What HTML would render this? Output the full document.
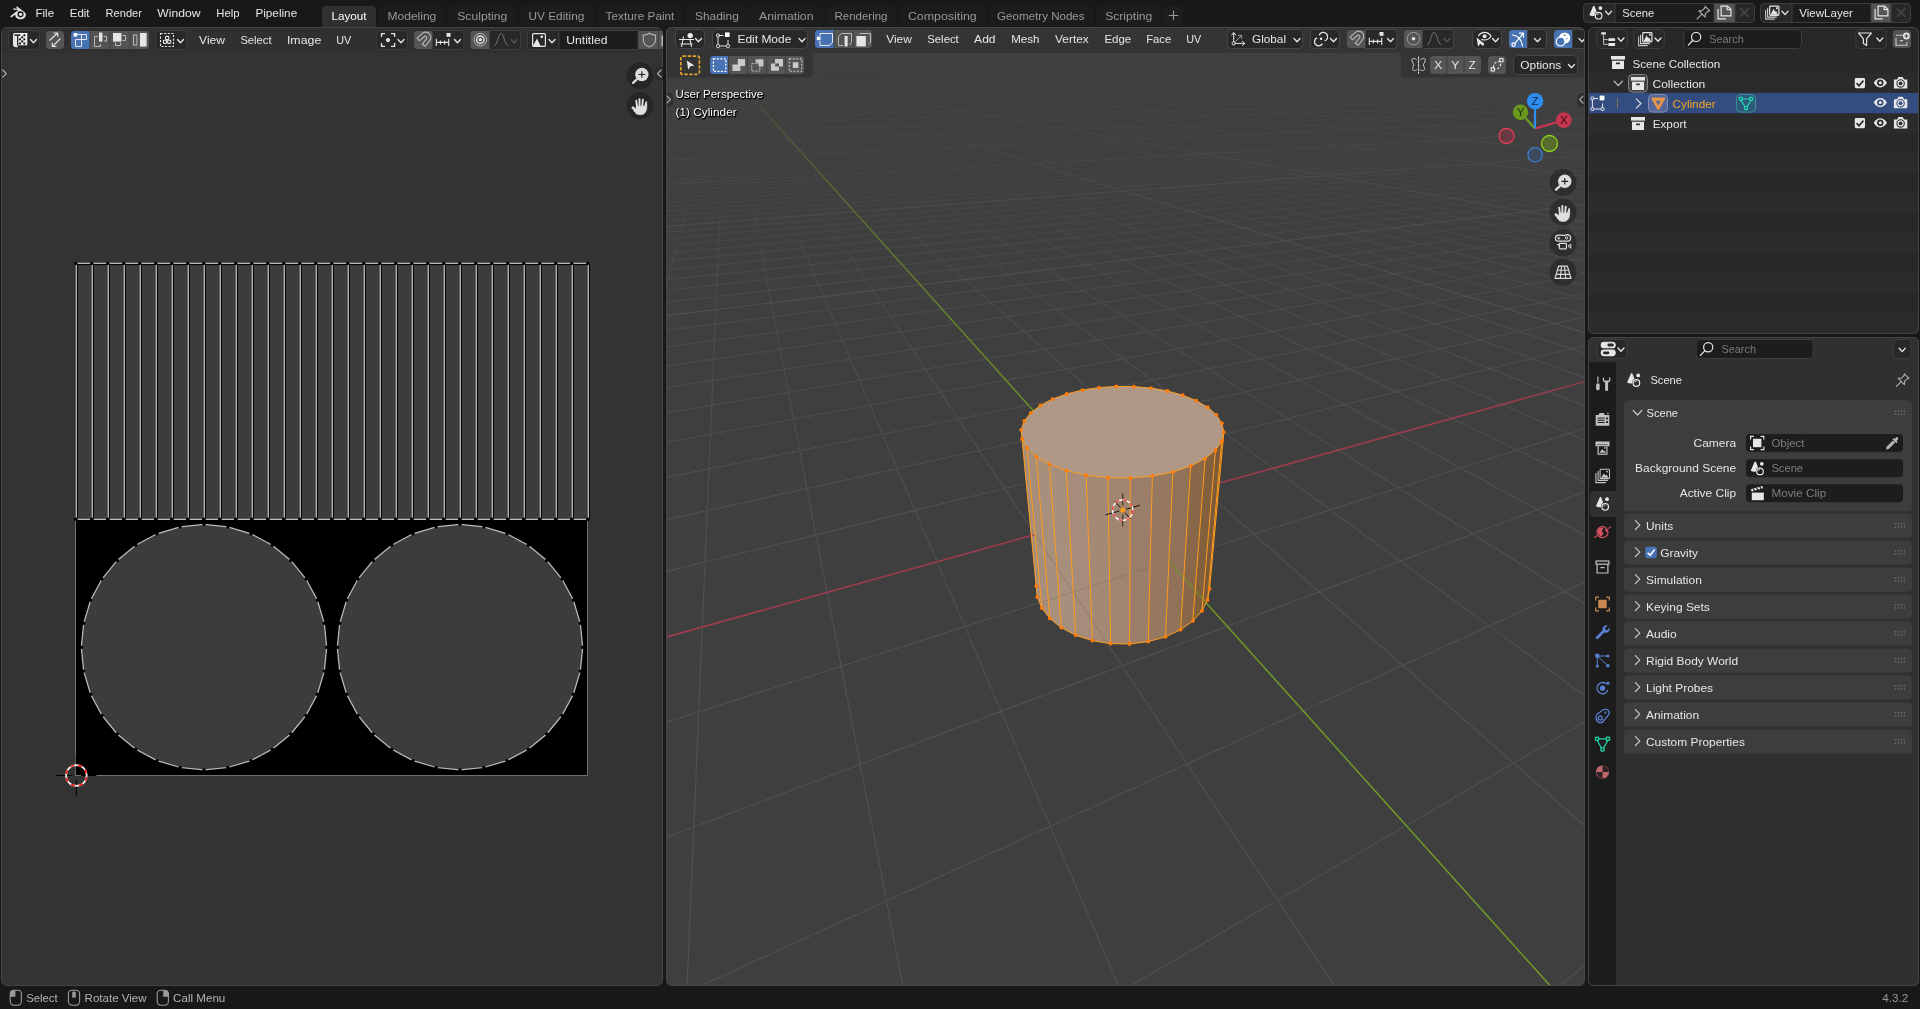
<!DOCTYPE html><html><head><meta charset="utf-8"><title>Blender</title><style>html,body{margin:0;padding:0;background:#181818;overflow:hidden}body{width:1920px;height:1009px}</style></head><body><svg width="1920" height="1009" viewBox="0 0 1920 1009" font-family="'Liberation Sans',sans-serif" style="display:block;will-change:transform">
<rect x="0" y="0" width="1920" height="1009" fill="#181818"/>
<defs>
<clipPath id="c3d"><rect x="666.5" y="27.5" width="918" height="958" rx="5"/></clipPath>
<clipPath id="cuv"><rect x="1.5" y="27.5" width="661" height="958" rx="5"/></clipPath>
<clipPath id="cout"><rect x="1588.5" y="27.5" width="330" height="306" rx="5"/></clipPath>
<clipPath id="cpr"><rect x="1588.5" y="337.5" width="330" height="648" rx="5"/></clipPath>
</defs>
<g transform="translate(9.3,5.1) scale(1.13)" fill="#e6e6e6">
<path d="M1.2 9.6 L8.2 4.2 L3.9 4.2 C3.2 4.2 3.2 3.1 3.9 3.1 L7.5 3.1 L6.3 2.1 C5.7 1.6 6.4 0.8 7 1.3 L13.6 6.4 C15.8 8.3 14.6 12.6 10 12.6 C6.6 12.6 5 10.3 5.3 8.4 L2.4 10.6 C1.5 11.2 0.5 10.2 1.2 9.6 Z M10 5.3 A2.7 2.7 0 1 0 10 10.9 A2.7 2.7 0 1 0 10 5.5 Z" fill-rule="evenodd"/>
<circle cx="10" cy="8.2" r="1.5"/>
</g>
<text x="35.4" y="17" fill="#e6e6e6" font-size="11.2" textLength="18.7" lengthAdjust="spacingAndGlyphs">File</text>
<text x="69.75" y="17" fill="#e6e6e6" font-size="11.2" textLength="19.8" lengthAdjust="spacingAndGlyphs">Edit</text>
<text x="105.6" y="17" fill="#e6e6e6" font-size="11.2" textLength="36.3" lengthAdjust="spacingAndGlyphs">Render</text>
<text x="157.25" y="17" fill="#e6e6e6" font-size="11.2" textLength="43.2" lengthAdjust="spacingAndGlyphs">Window</text>
<text x="216.25" y="17" fill="#e6e6e6" font-size="11.2" textLength="23.2" lengthAdjust="spacingAndGlyphs">Help</text>
<text x="255.4" y="17" fill="#e6e6e6" font-size="11.2" textLength="41.8" lengthAdjust="spacingAndGlyphs">Pipeline</text>
<path d="M326 6 H372 A4 4 0 0 1 376 10 V23 A4 4 0 0 1 372 27 H326 A4 4 0 0 1 322 23 V10 A4 4 0 0 1 326 6Z" fill="#303030"/>
<rect x="322" y="22" width="54" height="5" fill="#303030"/>
<text x="331.5" y="20" fill="#ffffff" font-size="11.2" textLength="35.0" lengthAdjust="spacingAndGlyphs">Layout</text>
<path d="M378 27V10a4 4 0 0 1 4-4H441.75a4 4 0 0 1 4 4V27Z" fill="#1c1c1c"/>
<text x="387.5" y="20" fill="#989898" font-size="11.2" textLength="48.8" lengthAdjust="spacingAndGlyphs">Modeling</text>
<path d="M447.75 27V10a4 4 0 0 1 4-4H512.75a4 4 0 0 1 4 4V27Z" fill="#1c1c1c"/>
<text x="457.25" y="20" fill="#989898" font-size="11.2" textLength="50.0" lengthAdjust="spacingAndGlyphs">Sculpting</text>
<path d="M519 27V10a4 4 0 0 1 4-4H589.9a4 4 0 0 1 4 4V27Z" fill="#1c1c1c"/>
<text x="528.5" y="20" fill="#989898" font-size="11.2" textLength="55.9" lengthAdjust="spacingAndGlyphs">UV Editing</text>
<path d="M596.1 27V10a4 4 0 0 1 4-4H679.9a4 4 0 0 1 4 4V27Z" fill="#1c1c1c"/>
<text x="605.6" y="20" fill="#989898" font-size="11.2" textLength="68.8" lengthAdjust="spacingAndGlyphs">Texture Paint</text>
<path d="M685.5 27V10a4 4 0 0 1 4-4H744.25a4 4 0 0 1 4 4V27Z" fill="#1c1c1c"/>
<text x="695" y="20" fill="#989898" font-size="11.2" textLength="43.8" lengthAdjust="spacingAndGlyphs">Shading</text>
<path d="M749.5 27V10a4 4 0 0 1 4-4H819a4 4 0 0 1 4 4V27Z" fill="#1c1c1c"/>
<text x="759" y="20" fill="#989898" font-size="11.2" textLength="54.5" lengthAdjust="spacingAndGlyphs">Animation</text>
<path d="M825.1 27V10a4 4 0 0 1 4-4H893a4 4 0 0 1 4 4V27Z" fill="#1c1c1c"/>
<text x="834.6" y="20" fill="#989898" font-size="11.2" textLength="52.9" lengthAdjust="spacingAndGlyphs">Rendering</text>
<path d="M898.4 27V10a4 4 0 0 1 4-4H982.2a4 4 0 0 1 4 4V27Z" fill="#1c1c1c"/>
<text x="907.9" y="20" fill="#989898" font-size="11.2" textLength="68.8" lengthAdjust="spacingAndGlyphs">Compositing</text>
<path d="M987.6 27V10a4 4 0 0 1 4-4H1090.1a4 4 0 0 1 4 4V27Z" fill="#1c1c1c"/>
<text x="997.1" y="20" fill="#989898" font-size="11.2" textLength="87.5" lengthAdjust="spacingAndGlyphs">Geometry Nodes</text>
<path d="M1095.7 27V10a4 4 0 0 1 4-4H1157.8a4 4 0 0 1 4 4V27Z" fill="#1c1c1c"/>
<text x="1105.2" y="20" fill="#989898" font-size="11.2" textLength="47.1" lengthAdjust="spacingAndGlyphs">Scripting</text>
<path d="M1163.5 27V10a4 4 0 0 1 4-4H1179a4 4 0 0 1 4 4V27Z" fill="#1d1d1d"/>
<path d="M1168.8 15.5H1178.2M1173.5 10.8V20.2" fill="none" stroke="#989898" stroke-width="1.1"/>
<rect x="0" y="26" width="1583" height="1.5" fill="#181818"/>
<rect x="322" y="26" width="54" height="1" fill="#303030"/>
<rect x="1583" y="3" width="172" height="20" fill="#3d3d3d" rx="4.5"/>
<clipPath id="gc1"><rect x="1584" y="4" width="170" height="18" rx="3.5"/></clipPath>
<g clip-path="url(#gc1)">
<rect x="1583" y="3" width="32" height="20" fill="#282828"/>
<rect x="1615" y="3" width="99" height="20" fill="#1d1d1d"/>
<rect x="1714" y="3" width="21" height="20" fill="#545454"/>
<rect x="1735" y="3" width="20" height="20" fill="#282828"/>
<rect x="1614.5" y="3" width="1" height="20" fill="#3e3e3e"/>
<rect x="1713.5" y="3" width="1" height="20" fill="#3e3e3e"/>
<rect x="1734.5" y="3" width="1" height="20" fill="#3e3e3e"/>
</g>
<text x="1622.3" y="16.5" fill="#e6e6e6" font-size="11.2" textLength="31.9" lengthAdjust="spacingAndGlyphs">Scene</text>
<rect x="1760" y="3" width="151" height="20" fill="#3d3d3d" rx="4.5"/>
<clipPath id="gc2"><rect x="1761" y="4" width="149" height="18" rx="3.5"/></clipPath>
<g clip-path="url(#gc2)">
<rect x="1760" y="3" width="32" height="20" fill="#282828"/>
<rect x="1792" y="3" width="79" height="20" fill="#1d1d1d"/>
<rect x="1871" y="3" width="20" height="20" fill="#545454"/>
<rect x="1891" y="3" width="20" height="20" fill="#282828"/>
<rect x="1791.5" y="3" width="1" height="20" fill="#3e3e3e"/>
<rect x="1870.5" y="3" width="1" height="20" fill="#3e3e3e"/>
<rect x="1890.5" y="3" width="1" height="20" fill="#3e3e3e"/>
</g>
<text x="1799.3" y="16.5" fill="#e6e6e6" font-size="11.2" textLength="53.6" lengthAdjust="spacingAndGlyphs">ViewLayer</text>
<g transform="translate(1589,5.5)">
<path d="M0.3 9.6 L4.2 0.6 Q5 -0.2 5.6 0.8 L7.6 6 Q5.2 7.2 5.6 10.4 Q2.5 11 0.3 9.6Z" fill="#e6e6e6"/>
<circle cx="11.4" cy="2.6" r="1.9" fill="#e6e6e6"/>
<circle cx="9.6" cy="10.2" r="3.3" fill="#282828" stroke="#e6e6e6" stroke-width="1.2"/>
<path d="M8 9.6A2 2 0 0 1 9.8 8.3" stroke="#e6e6e6" stroke-width="0.9" fill="none"/>
</g>
<path d="M1605.5 11.3L1608.5 14.6L1611.5 11.3" fill="none" stroke="#e6e6e6" stroke-width="1.3" stroke-linecap="round" stroke-linejoin="round"/>
<g transform="translate(1696.5,5.5)" fill="none" stroke="#b0b0b0" stroke-width="1.1" stroke-linejoin="round" stroke-linecap="round">
<path d="M8.6 0.8L13.2 5.4L11.4 5.8L8.8 8.4L8.6 11.6L2.4 5.4L5.6 5.2L8.2 2.6Z"/>
<path d="M5.4 8.6L0.6 13.4"/>
</g>
<g transform="translate(1717.5,5.5)" fill="none" stroke="#e6e6e6" stroke-width="1.2">
<path d="M0.6 3.6V13.4H8.4"/>
<path d="M3.6 0.6H10L13.4 3.8V10.4H3.6Z" fill="#545454"/>
<path d="M9.6 0.6V4.2H13.4"/>
</g>
<path d="M1740.3 8.3L1748.7 16.7M1748.7 8.3L1740.3 16.7" fill="none" stroke="#4a4a4a" stroke-width="1.3"/>
<g transform="translate(1765,5.5)" fill="none" stroke="#e6e6e6" stroke-width="1.1">
<path d="M0.6 4.6V13.6H9.8" stroke-opacity="0.8"/><path d="M2.6 2.8V11.6H11.8" stroke-opacity="0.9"/>
<rect x="4.7" y="0.6" width="9.2" height="9.2" rx="0.8" fill="#282828" stroke-width="1.2"/>
<path d="M5.6 9.2L8.6 3.2L10.2 6.2L11 5.2L13 9.2Z" fill="#e6e6e6" stroke="none"/>
<rect x="11" y="1.8" width="1.8" height="1.8" fill="#e6e6e6" stroke="none"/>
</g>
<path d="M1782 11.3L1785 14.6L1788 11.3" fill="none" stroke="#e6e6e6" stroke-width="1.3" stroke-linecap="round" stroke-linejoin="round"/>
<g transform="translate(1874.5,5.5)" fill="none" stroke="#e6e6e6" stroke-width="1.2">
<path d="M0.6 3.6V13.4H8.4"/>
<path d="M3.6 0.6H10L13.4 3.8V10.4H3.6Z" fill="#545454"/>
<path d="M9.6 0.6V4.2H13.4"/>
</g>
<path d="M1896.8 8.3L1905.2 16.7M1905.2 8.3L1896.8 16.7" fill="none" stroke="#4a4a4a" stroke-width="1.3"/>
<rect x="1.5" y="27.5" width="661" height="958" fill="#333333" rx="5" stroke="#434343" stroke-width="1"/>
<g clip-path="url(#cuv)">
<rect x="2" y="28" width="660" height="25" fill="#303030"/>
<rect x="76" y="519" width="511" height="256" fill="#000000"/>
<path d="M75.5 519V775.5H587.5V519" fill="none" stroke="#707070" stroke-width="1"/>
<rect x="76" y="263" width="512" height="256.5" fill="#3c3c3c"/>
<path d="M77.5 263.5V519.5M93.5 263.5V519.5M109.5 263.5V519.5M125.5 263.5V519.5M141.5 263.5V519.5M157.5 263.5V519.5M173.5 263.5V519.5M189.5 263.5V519.5M205.5 263.5V519.5M221.5 263.5V519.5M237.5 263.5V519.5M253.5 263.5V519.5M269.5 263.5V519.5M285.5 263.5V519.5M301.5 263.5V519.5M317.5 263.5V519.5M333.5 263.5V519.5M349.5 263.5V519.5M365.5 263.5V519.5M381.5 263.5V519.5M397.5 263.5V519.5M413.5 263.5V519.5M429.5 263.5V519.5M445.5 263.5V519.5M461.5 263.5V519.5M477.5 263.5V519.5M493.5 263.5V519.5M509.5 263.5V519.5M525.5 263.5V519.5M541.5 263.5V519.5M557.5 263.5V519.5M573.5 263.5V519.5M589.5 263.5V519.5" fill="none" stroke="#000000" stroke-width="0.9"/>
<path d="M76 264.6H589M76 520.6H589" fill="none" stroke="#000000" stroke-width="1"/>
<path d="M76.3 263.3V519.5M92.3 263.3V519.5M108.3 263.3V519.5M124.3 263.3V519.5M140.3 263.3V519.5M156.3 263.3V519.5M172.3 263.3V519.5M188.3 263.3V519.5M204.3 263.3V519.5M220.3 263.3V519.5M236.3 263.3V519.5M252.3 263.3V519.5M268.3 263.3V519.5M284.3 263.3V519.5M300.3 263.3V519.5M316.3 263.3V519.5M332.3 263.3V519.5M348.3 263.3V519.5M364.3 263.3V519.5M380.3 263.3V519.5M396.3 263.3V519.5M412.3 263.3V519.5M428.3 263.3V519.5M444.3 263.3V519.5M460.3 263.3V519.5M476.3 263.3V519.5M492.3 263.3V519.5M508.3 263.3V519.5M524.3 263.3V519.5M540.3 263.3V519.5M556.3 263.3V519.5M572.3 263.3V519.5M588.3 263.3V519.5" fill="none" stroke="#bcbcbc" stroke-width="1.25"/>
<path d="M76 263.3H588.5M76 519.3H588.5" fill="none" stroke="#bcbcbc" stroke-width="1.25"/>
<path d="M326.7 647.2L324.3 623.3L317.4 600.2L306.0 579.0L290.8 560.4L272.2 545.2L251.0 533.8L227.9 526.9L204.0 524.5L180.1 526.9L157.0 533.8L135.8 545.2L117.2 560.4L102.0 579.0L90.6 600.2L83.7 623.3L81.3 647.2L83.7 671.1L90.6 694.2L102.0 715.4L117.2 734.0L135.8 749.2L157.0 760.6L180.1 767.5L204.0 769.9L227.9 767.5L251.0 760.6L272.2 749.2L290.8 734.0L306.0 715.4L317.4 694.2L324.3 671.1Z" fill="#3c3c3c" stroke="#bcbcbc" stroke-width="1.25"/>
<circle cx="326.7" cy="647.2" r="1.7" fill="#000"/>
<circle cx="324.3" cy="623.3" r="1.7" fill="#000"/>
<circle cx="317.4" cy="600.2" r="1.7" fill="#000"/>
<circle cx="306.0" cy="579.0" r="1.7" fill="#000"/>
<circle cx="290.8" cy="560.4" r="1.7" fill="#000"/>
<circle cx="272.2" cy="545.2" r="1.7" fill="#000"/>
<circle cx="251.0" cy="533.8" r="1.7" fill="#000"/>
<circle cx="227.9" cy="526.9" r="1.7" fill="#000"/>
<circle cx="204.0" cy="524.5" r="1.7" fill="#000"/>
<circle cx="180.1" cy="526.9" r="1.7" fill="#000"/>
<circle cx="157.0" cy="533.8" r="1.7" fill="#000"/>
<circle cx="135.8" cy="545.2" r="1.7" fill="#000"/>
<circle cx="117.2" cy="560.4" r="1.7" fill="#000"/>
<circle cx="102.0" cy="579.0" r="1.7" fill="#000"/>
<circle cx="90.6" cy="600.2" r="1.7" fill="#000"/>
<circle cx="83.7" cy="623.3" r="1.7" fill="#000"/>
<circle cx="81.3" cy="647.2" r="1.7" fill="#000"/>
<circle cx="83.7" cy="671.1" r="1.7" fill="#000"/>
<circle cx="90.6" cy="694.2" r="1.7" fill="#000"/>
<circle cx="102.0" cy="715.4" r="1.7" fill="#000"/>
<circle cx="117.2" cy="734.0" r="1.7" fill="#000"/>
<circle cx="135.8" cy="749.2" r="1.7" fill="#000"/>
<circle cx="157.0" cy="760.6" r="1.7" fill="#000"/>
<circle cx="180.1" cy="767.5" r="1.7" fill="#000"/>
<circle cx="204.0" cy="769.9" r="1.7" fill="#000"/>
<circle cx="227.9" cy="767.5" r="1.7" fill="#000"/>
<circle cx="251.0" cy="760.6" r="1.7" fill="#000"/>
<circle cx="272.2" cy="749.2" r="1.7" fill="#000"/>
<circle cx="290.8" cy="734.0" r="1.7" fill="#000"/>
<circle cx="306.0" cy="715.4" r="1.7" fill="#000"/>
<circle cx="317.4" cy="694.2" r="1.7" fill="#000"/>
<circle cx="324.3" cy="671.1" r="1.7" fill="#000"/>
<path d="M582.7 647.2L580.3 623.3L573.4 600.2L562.0 579.0L546.8 560.4L528.2 545.2L507.0 533.8L483.9 526.9L460.0 524.5L436.1 526.9L413.0 533.8L391.8 545.2L373.2 560.4L358.0 579.0L346.6 600.2L339.7 623.3L337.3 647.2L339.7 671.1L346.6 694.2L358.0 715.4L373.2 734.0L391.8 749.2L413.0 760.6L436.1 767.5L460.0 769.9L483.9 767.5L507.0 760.6L528.2 749.2L546.8 734.0L562.0 715.4L573.4 694.2L580.3 671.1Z" fill="#3c3c3c" stroke="#bcbcbc" stroke-width="1.25"/>
<circle cx="582.7" cy="647.2" r="1.7" fill="#000"/>
<circle cx="580.3" cy="623.3" r="1.7" fill="#000"/>
<circle cx="573.4" cy="600.2" r="1.7" fill="#000"/>
<circle cx="562.0" cy="579.0" r="1.7" fill="#000"/>
<circle cx="546.8" cy="560.4" r="1.7" fill="#000"/>
<circle cx="528.2" cy="545.2" r="1.7" fill="#000"/>
<circle cx="507.0" cy="533.8" r="1.7" fill="#000"/>
<circle cx="483.9" cy="526.9" r="1.7" fill="#000"/>
<circle cx="460.0" cy="524.5" r="1.7" fill="#000"/>
<circle cx="436.1" cy="526.9" r="1.7" fill="#000"/>
<circle cx="413.0" cy="533.8" r="1.7" fill="#000"/>
<circle cx="391.8" cy="545.2" r="1.7" fill="#000"/>
<circle cx="373.2" cy="560.4" r="1.7" fill="#000"/>
<circle cx="358.0" cy="579.0" r="1.7" fill="#000"/>
<circle cx="346.6" cy="600.2" r="1.7" fill="#000"/>
<circle cx="339.7" cy="623.3" r="1.7" fill="#000"/>
<circle cx="337.3" cy="647.2" r="1.7" fill="#000"/>
<circle cx="339.7" cy="671.1" r="1.7" fill="#000"/>
<circle cx="346.6" cy="694.2" r="1.7" fill="#000"/>
<circle cx="358.0" cy="715.4" r="1.7" fill="#000"/>
<circle cx="373.2" cy="734.0" r="1.7" fill="#000"/>
<circle cx="391.8" cy="749.2" r="1.7" fill="#000"/>
<circle cx="413.0" cy="760.6" r="1.7" fill="#000"/>
<circle cx="436.1" cy="767.5" r="1.7" fill="#000"/>
<circle cx="460.0" cy="769.9" r="1.7" fill="#000"/>
<circle cx="483.9" cy="767.5" r="1.7" fill="#000"/>
<circle cx="507.0" cy="760.6" r="1.7" fill="#000"/>
<circle cx="528.2" cy="749.2" r="1.7" fill="#000"/>
<circle cx="546.8" cy="734.0" r="1.7" fill="#000"/>
<circle cx="562.0" cy="715.4" r="1.7" fill="#000"/>
<circle cx="573.4" cy="694.2" r="1.7" fill="#000"/>
<circle cx="580.3" cy="671.1" r="1.7" fill="#000"/>
<circle cx="75.8" cy="263.4" r="1.7" fill="#000"/>
<circle cx="75.8" cy="519.3" r="1.7" fill="#000"/>
<circle cx="91.8" cy="263.4" r="1.7" fill="#000"/>
<circle cx="91.8" cy="519.3" r="1.7" fill="#000"/>
<circle cx="107.8" cy="263.4" r="1.7" fill="#000"/>
<circle cx="107.8" cy="519.3" r="1.7" fill="#000"/>
<circle cx="123.8" cy="263.4" r="1.7" fill="#000"/>
<circle cx="123.8" cy="519.3" r="1.7" fill="#000"/>
<circle cx="139.8" cy="263.4" r="1.7" fill="#000"/>
<circle cx="139.8" cy="519.3" r="1.7" fill="#000"/>
<circle cx="155.8" cy="263.4" r="1.7" fill="#000"/>
<circle cx="155.8" cy="519.3" r="1.7" fill="#000"/>
<circle cx="171.8" cy="263.4" r="1.7" fill="#000"/>
<circle cx="171.8" cy="519.3" r="1.7" fill="#000"/>
<circle cx="187.8" cy="263.4" r="1.7" fill="#000"/>
<circle cx="187.8" cy="519.3" r="1.7" fill="#000"/>
<circle cx="203.8" cy="263.4" r="1.7" fill="#000"/>
<circle cx="203.8" cy="519.3" r="1.7" fill="#000"/>
<circle cx="219.8" cy="263.4" r="1.7" fill="#000"/>
<circle cx="219.8" cy="519.3" r="1.7" fill="#000"/>
<circle cx="235.8" cy="263.4" r="1.7" fill="#000"/>
<circle cx="235.8" cy="519.3" r="1.7" fill="#000"/>
<circle cx="251.8" cy="263.4" r="1.7" fill="#000"/>
<circle cx="251.8" cy="519.3" r="1.7" fill="#000"/>
<circle cx="267.8" cy="263.4" r="1.7" fill="#000"/>
<circle cx="267.8" cy="519.3" r="1.7" fill="#000"/>
<circle cx="283.8" cy="263.4" r="1.7" fill="#000"/>
<circle cx="283.8" cy="519.3" r="1.7" fill="#000"/>
<circle cx="299.8" cy="263.4" r="1.7" fill="#000"/>
<circle cx="299.8" cy="519.3" r="1.7" fill="#000"/>
<circle cx="315.8" cy="263.4" r="1.7" fill="#000"/>
<circle cx="315.8" cy="519.3" r="1.7" fill="#000"/>
<circle cx="331.8" cy="263.4" r="1.7" fill="#000"/>
<circle cx="331.8" cy="519.3" r="1.7" fill="#000"/>
<circle cx="347.8" cy="263.4" r="1.7" fill="#000"/>
<circle cx="347.8" cy="519.3" r="1.7" fill="#000"/>
<circle cx="363.8" cy="263.4" r="1.7" fill="#000"/>
<circle cx="363.8" cy="519.3" r="1.7" fill="#000"/>
<circle cx="379.8" cy="263.4" r="1.7" fill="#000"/>
<circle cx="379.8" cy="519.3" r="1.7" fill="#000"/>
<circle cx="395.8" cy="263.4" r="1.7" fill="#000"/>
<circle cx="395.8" cy="519.3" r="1.7" fill="#000"/>
<circle cx="411.8" cy="263.4" r="1.7" fill="#000"/>
<circle cx="411.8" cy="519.3" r="1.7" fill="#000"/>
<circle cx="427.8" cy="263.4" r="1.7" fill="#000"/>
<circle cx="427.8" cy="519.3" r="1.7" fill="#000"/>
<circle cx="443.8" cy="263.4" r="1.7" fill="#000"/>
<circle cx="443.8" cy="519.3" r="1.7" fill="#000"/>
<circle cx="459.8" cy="263.4" r="1.7" fill="#000"/>
<circle cx="459.8" cy="519.3" r="1.7" fill="#000"/>
<circle cx="475.8" cy="263.4" r="1.7" fill="#000"/>
<circle cx="475.8" cy="519.3" r="1.7" fill="#000"/>
<circle cx="491.8" cy="263.4" r="1.7" fill="#000"/>
<circle cx="491.8" cy="519.3" r="1.7" fill="#000"/>
<circle cx="507.8" cy="263.4" r="1.7" fill="#000"/>
<circle cx="507.8" cy="519.3" r="1.7" fill="#000"/>
<circle cx="523.8" cy="263.4" r="1.7" fill="#000"/>
<circle cx="523.8" cy="519.3" r="1.7" fill="#000"/>
<circle cx="539.8" cy="263.4" r="1.7" fill="#000"/>
<circle cx="539.8" cy="519.3" r="1.7" fill="#000"/>
<circle cx="555.8" cy="263.4" r="1.7" fill="#000"/>
<circle cx="555.8" cy="519.3" r="1.7" fill="#000"/>
<circle cx="571.8" cy="263.4" r="1.7" fill="#000"/>
<circle cx="571.8" cy="519.3" r="1.7" fill="#000"/>
<circle cx="587.8" cy="263.4" r="1.7" fill="#000"/>
<circle cx="587.8" cy="519.3" r="1.7" fill="#000"/>
<g transform="translate(76.4,775.5)">
<path d="M-20 0H-4.7M4.7 0H20M0 -20V-4.7M0 4.7V20" fill="none" stroke="#000" stroke-width="1.2"/>
<circle r="10.3" fill="none" stroke="#f2f2f2" stroke-width="1.7"/>
<circle r="10.3" fill="none" stroke="#f01818" stroke-width="1.7" stroke-dasharray="4.045 4.045" transform="rotate(8)"/>
</g>
</g>
<rect x="8.5" y="30.5" width="31" height="19" fill="#282828" rx="4" stroke="#3d3d3d" stroke-width="1"/>
<g transform="translate(13,33)">
<path d="M0 1.8Q0 0 2 0H14.3V12.2H4.6V14.2Q1.6 14.6 0 12.4Z" fill="#f2f2f2"/>
<path d="M0.3 2.6H4V14.1Q1.6 14.4 0.3 12.4Z" fill="#e2e2e2"/>
<path d="M1.4 2.1H7.4" stroke="#161616" stroke-width="1.5" fill="none"/><path d="M4.7 2.6V12.3" stroke="#202020" stroke-width="1.3" fill="none"/>
<rect x="10.4" y="1.3" width="1.9" height="1.9" fill="#0a0a0a"/>
<rect x="8.25" y="3.35" width="1.9" height="1.9" fill="#0a0a0a"/>
<rect x="6.1" y="5.4" width="1.9" height="1.9" fill="#0a0a0a"/>
<rect x="10.4" y="5.4" width="1.9" height="1.9" fill="#0a0a0a"/>
<rect x="8.25" y="7.45" width="1.9" height="1.9" fill="#0a0a0a"/>
<rect x="6.1" y="9.5" width="1.9" height="1.9" fill="#0a0a0a"/>
<rect x="10.4" y="9.5" width="1.9" height="1.9" fill="#0a0a0a"/>
</g>
<path d="M30.5 39.5L33.5 42.8L36.5 39.5" fill="none" stroke="#e6e6e6" stroke-width="1.3" stroke-linecap="round" stroke-linejoin="round"/>
<rect x="46" y="31" width="18" height="18" fill="#545454" rx="3.5"/>
<path d="M49.5 40.5L57.5 33M53.5 33H57.7V37M60.5 38.5L52.5 46.5M56.5 46.5H52.3V42.5" fill="none" stroke="#e6e6e6" stroke-width="1.1" stroke-linejoin="round"/>
<clipPath id="gc3"><rect x="71" y="31" width="78" height="18" rx="3.5"/></clipPath>
<g clip-path="url(#gc3)">
<rect x="70" y="30" width="20" height="20" fill="#4772b3"/>
<rect x="90" y="30" width="20" height="20" fill="#545454"/>
<rect x="110" y="30" width="20" height="20" fill="#545454"/>
<rect x="130" y="30" width="20" height="20" fill="#545454"/>
<rect x="89.5" y="30" width="1" height="20" fill="#3e3e3e"/>
<rect x="109.5" y="30" width="1" height="20" fill="#3e3e3e"/>
<rect x="129.5" y="30" width="1" height="20" fill="#3e3e3e"/>
</g>
<g fill="none" stroke="#e6e6e6" stroke-width="1">
<path d="M75.5 34.5H86.5V39.5H75.5V46.5H81.5V34.5"/>
<rect x="73.6" y="33" width="3.6" height="3.6" fill="#fff" stroke="none"/>
</g>
<g fill="none" stroke="#b8b8b8" stroke-width="1">
<path d="M98 36.5H94.5V46.5H100.5V44M103.5 36.5H106.5V41H104"/>
<rect x="99" y="32.6" width="3.4" height="9" fill="#e6e6e6" stroke="none"/>
</g>
<g fill="none" stroke="#b8b8b8" stroke-width="1">
<path d="M115.5 42.5V45.5H120.5V42.5M122.5 35.5H125.5V40.5H122.5"/>
<rect x="113" y="33" width="8.4" height="8.6" fill="#e6e6e6" stroke="none"/>
</g>
<g fill="none" stroke="#b8b8b8" stroke-width="1">
<rect x="133.5" y="35" width="3.4" height="10"/>
<rect x="140" y="33" width="6.6" height="13.6" fill="#e6e6e6" stroke="none"/>
</g>
<rect x="155.5" y="30.5" width="31" height="19" fill="#282828" rx="4" stroke="#3d3d3d" stroke-width="1"/>
<g fill="none" stroke="#e6e6e6" stroke-width="1.1">
<rect x="160.5" y="33.5" width="13" height="13" stroke-dasharray="2.2 1.4"/>
<rect x="165.6" y="36.4" width="3.2" height="3.2" rx="0.8"/><rect x="163.4" y="40.2" width="3.2" height="3.2" rx="0.8"/><rect x="167.6" y="40.2" width="3.2" height="3.2" rx="0.8"/>
</g>
<path d="M177.5 39.5L180.5 42.8L183.5 39.5" fill="none" stroke="#e6e6e6" stroke-width="1.3" stroke-linecap="round" stroke-linejoin="round"/>
<text x="199.1" y="44" fill="#e6e6e6" font-size="11.2" textLength="25.9" lengthAdjust="spacingAndGlyphs">View</text>
<text x="240.4" y="44" fill="#e6e6e6" font-size="11.2" textLength="31.1" lengthAdjust="spacingAndGlyphs">Select</text>
<text x="286.9" y="44" fill="#e6e6e6" font-size="11.2" textLength="34.4" lengthAdjust="spacingAndGlyphs">Image</text>
<text x="336.25" y="44" fill="#e6e6e6" font-size="11.2" textLength="15.0" lengthAdjust="spacingAndGlyphs">UV</text>
<rect x="376.5" y="30.5" width="31" height="19" fill="#282828" rx="4" stroke="#3d3d3d" stroke-width="1"/>
<g fill="none" stroke="#e6e6e6" stroke-width="1.2">
<path d="M381.5 37V33.6H385M391 33.6H394.6V37M394.6 43V46.4H391M385 46.4H381.5V43" fill="none" stroke="#e6e6e6" stroke-width="1.3"/>
<circle cx="388" cy="40.1" r="2.1" fill="#e6e6e6" stroke="none"/>
</g>
<path d="M398 39.5L401 42.8L404 39.5" fill="none" stroke="#e6e6e6" stroke-width="1.3" stroke-linecap="round" stroke-linejoin="round"/>
<g transform="translate(0,0)">
<rect x="413" y="30" width="51.5" height="20" fill="#3d3d3d" rx="4.5"/>
<rect x="413" y="29.8" width="19.5" height="20.4" fill="#303030"/>
<clipPath id="gc4"><rect x="414" y="31" width="49.5" height="18" rx="3.5"/></clipPath>
<g clip-path="url(#gc4)">
<rect x="413" y="30" width="19.5" height="20" fill="#545454"/>
<rect x="432.5" y="30" width="32" height="20" fill="#282828"/>
<rect x="432" y="30" width="1" height="20" fill="#3e3e3e"/>
</g>
<g transform="translate(415.9,32.4) scale(1.1)" fill="none" stroke="#b4b4b4" stroke-width="1.05" stroke-linecap="round">
<path d="M1 5.2L5.2 1.6A4.6 4.6 0 0 1 12.6 7.2L8.4 12.6L5.8 10.6L9.6 5.8A1.4 1.4 0 0 0 7.4 4L3.2 7.6Z"/>
</g>
<path d="M436.3 38.8V46M436.3 42.4H448.7M440.4 40.4V44.4M444.6 40.4V44.4M448.7 38.8V46" fill="none" stroke="#e6e6e6" stroke-width="1.1"/>
<rect x="446.5" y="33" width="4" height="3.8" fill="#e6e6e6"/>
<path d="M454.5 39.5L457.5 42.8L460.5 39.5" fill="none" stroke="#e6e6e6" stroke-width="1.3" stroke-linecap="round" stroke-linejoin="round"/>
</g>
<g transform="translate(0,0)">
<rect x="469.5" y="30" width="51.5" height="20" fill="#3d3d3d" rx="4.5"/>
<rect x="469.5" y="29.8" width="20" height="20.4" fill="#303030"/>
<clipPath id="gc5"><rect x="470.5" y="31" width="49.5" height="18" rx="3.5"/></clipPath>
<g clip-path="url(#gc5)">
<rect x="469.5" y="30" width="20" height="20" fill="#545454"/>
<rect x="489.5" y="30" width="31.5" height="20" fill="#282828"/>
<rect x="489" y="30" width="1" height="20" fill="#3e3e3e"/>
</g>
<circle cx="480.3" cy="39.7" r="6.3" fill="none" stroke="#b8b8b8" stroke-width="1"/>
<circle cx="480.3" cy="39.7" r="3.7" fill="none" stroke="#e6e6e6" stroke-width="1.3"/>
<circle cx="480.3" cy="39.7" r="1.6" fill="#e6e6e6"/>
<path d="M494.1 45.5C498.1 45.5 497.6 33.5 501.1 33.5C504.6 33.5 504.1 45.5 508.1 45.5" fill="none" stroke="#6a6a6a" stroke-width="1.1"/>
<path d="M511 39.5L514 42.8L517 39.5" fill="none" stroke="#555555" stroke-width="1.3" stroke-linecap="round" stroke-linejoin="round"/>
</g>
<rect x="527" y="30" width="153" height="20" fill="#3d3d3d" rx="4.5"/>
<rect x="638" y="29.8" width="20.5" height="20.4" fill="#303030"/>
<rect x="658.5" y="29.8" width="21.5" height="20.4" fill="#303030"/>
<clipPath id="gc6"><rect x="528" y="31" width="151" height="18" rx="3.5"/></clipPath>
<g clip-path="url(#gc6)">
<rect x="527" y="30" width="32" height="20" fill="#282828"/>
<rect x="559" y="30" width="79" height="20" fill="#1d1d1d"/>
<rect x="638" y="30" width="20.5" height="20" fill="#545454"/>
<rect x="658.5" y="30" width="21.5" height="20" fill="#545454"/>
<rect x="558.5" y="30" width="1" height="20" fill="#3e3e3e"/>
<rect x="637.5" y="30" width="1" height="20" fill="#3e3e3e"/>
<rect x="658" y="30" width="1" height="20" fill="#3e3e3e"/>
</g>
<g transform="translate(532,33)">
<rect x="0.6" y="0.6" width="12.8" height="12.8" rx="1" fill="none" stroke="#e6e6e6" stroke-width="1.2"/>
<path d="M0.8 13L5 5.6L8.6 13Z" fill="#e6e6e6"/><circle cx="9.8" cy="3.8" r="1.4" fill="#e6e6e6"/>
</g>
<path d="M549 39.5L552 42.8L555 39.5" fill="none" stroke="#e6e6e6" stroke-width="1.3" stroke-linecap="round" stroke-linejoin="round"/>
<text x="566.25" y="44" fill="#e6e6e6" font-size="11.2" textLength="41.2" lengthAdjust="spacingAndGlyphs">Untitled</text>
<path d="M649.4 33.2C651.4 34.8 653.9 35 655.5 35V40C655.5 43.6 652.4 45.8 649.4 47C646.4 45.8 643.3 43.6 643.3 40V35C644.9 35 647.4 34.8 649.4 33.2Z" fill="none" stroke="#b4b4b4" stroke-width="1.1"/>
<rect x="661.6" y="35.6" width="1.2" height="10.6" fill="#d0d0d0"/>
<rect x="663" y="27" width="3" height="960" fill="#181818"/>
<path d="M663 27.5 V33 A5 5 0 0 0 658 27.5 Z" fill="#181818"/>
<circle cx="640.1" cy="75.7" r="13.4" fill="#1c1c1c" fill-opacity="0.6"/>
<circle cx="640.1" cy="105.5" r="13.4" fill="#1c1c1c" fill-opacity="0.6"/>
<g transform="translate(640.1,75.7)">
<circle cx="1.75" cy="-1.2" r="6.7" fill="#dcdcdc"/>
<path d="M-3.4 3.8L-7 7.2" stroke="#dcdcdc" stroke-width="2.3" stroke-linecap="round"/>
<path d="M-1.6 -1.2H5.1M1.75 -4.5V2.1" stroke="#262626" stroke-width="1.2"/>
</g>
<g transform="translate(640.1,105.8)" fill="#e0e0e0" stroke="#e0e0e0" stroke-linecap="round">
<path d="M-3.4 8.2C-5.4 6.6 -6.4 4.2 -8.2 2.2C-8.8 1.2 -7.4 0.4 -6.4 1.2L-4 3.4V0.6L5 0.2L6.6 -2C7 2.8 6.6 5.8 3.6 8.2C1.6 9.2 -1.4 9.2 -3.4 8.2Z" stroke-width="0.6"/>
<path d="M-3 1.6L-3.8 -5" stroke-width="1.9"/><path d="M-0.6 1L-0.6 -6.6" stroke-width="1.9"/><path d="M2 1.2L2.8 -6" stroke-width="1.9"/><path d="M4.6 2L6.2 -3.6" stroke-width="1.8"/>
</g>
<rect x="655" y="66.8" width="14" height="13.6" rx="4" fill="#2b2b2b"/>
<rect x="663" y="60" width="3" height="30" fill="#181818"/>
<path d="M661.1 70L657.5 73.6L661.1 77.2" fill="none" stroke="#b0b0b0" stroke-width="1.2" stroke-linecap="round" stroke-linejoin="round"/>
<path d="M2.8 70L6.4 73.6L2.8 77.2" fill="none" stroke="#b0b0b0" stroke-width="1.2" stroke-linecap="round" stroke-linejoin="round"/>
<g clip-path="url(#c3d)">
<rect x="666" y="27" width="920" height="960" fill="#3f3f3f"/>
<defs>
<linearGradient id="g1" gradientUnits="userSpaceOnUse" x1="0" y1="68.6" x2="0" y2="986">
<stop offset="0.0000" stop-color="#000000"/>
<stop offset="0.0004" stop-color="#000000"/>
<stop offset="0.0017" stop-color="#000000"/>
<stop offset="0.0042" stop-color="#000000"/>
<stop offset="0.0080" stop-color="#000000"/>
<stop offset="0.0130" stop-color="#000000"/>
<stop offset="0.0194" stop-color="#000000"/>
<stop offset="0.0272" stop-color="#000000"/>
<stop offset="0.0366" stop-color="#000000"/>
<stop offset="0.0474" stop-color="#030303"/>
<stop offset="0.0597" stop-color="#090909"/>
<stop offset="0.0737" stop-color="#141414"/>
<stop offset="0.0892" stop-color="#212121"/>
<stop offset="0.1064" stop-color="#323232"/>
<stop offset="0.1252" stop-color="#444444"/>
<stop offset="0.1457" stop-color="#585858"/>
<stop offset="0.1680" stop-color="#6e6e6e"/>
<stop offset="0.1919" stop-color="#848484"/>
<stop offset="0.2176" stop-color="#9a9a9a"/>
<stop offset="0.2451" stop-color="#b0b0b0"/>
<stop offset="0.2744" stop-color="#c3c3c3"/>
<stop offset="0.3055" stop-color="#cfcfcf"/>
<stop offset="0.3384" stop-color="#dadada"/>
<stop offset="0.3732" stop-color="#e3e3e3"/>
<stop offset="0.4098" stop-color="#ebebeb"/>
<stop offset="0.4483" stop-color="#f1f1f1"/>
<stop offset="0.4887" stop-color="#f6f6f6"/>
<stop offset="0.5310" stop-color="#f9f9f9"/>
<stop offset="0.5753" stop-color="#fbfbfb"/>
<stop offset="0.6215" stop-color="#fdfdfd"/>
<stop offset="0.6696" stop-color="#fefefe"/>
<stop offset="0.7197" stop-color="#fefefe"/>
<stop offset="0.7717" stop-color="#ffffff"/>
<stop offset="0.8258" stop-color="#ffffff"/>
<stop offset="0.8818" stop-color="#ffffff"/>
<stop offset="0.9399" stop-color="#ffffff"/>
<stop offset="1.0000" stop-color="#ffffff"/>
</linearGradient>
<linearGradient id="g10" gradientUnits="userSpaceOnUse" x1="0" y1="68.6" x2="0" y2="986">
<stop offset="0.0000" stop-color="#000000"/>
<stop offset="0.0004" stop-color="#000000"/>
<stop offset="0.0017" stop-color="#000000"/>
<stop offset="0.0042" stop-color="#000000"/>
<stop offset="0.0080" stop-color="#030303"/>
<stop offset="0.0130" stop-color="#090909"/>
<stop offset="0.0194" stop-color="#111111"/>
<stop offset="0.0272" stop-color="#1a1a1a"/>
<stop offset="0.0366" stop-color="#232323"/>
<stop offset="0.0474" stop-color="#2d2d2d"/>
<stop offset="0.0597" stop-color="#383838"/>
<stop offset="0.0737" stop-color="#444444"/>
<stop offset="0.0892" stop-color="#515151"/>
<stop offset="0.1064" stop-color="#5e5e5e"/>
<stop offset="0.1252" stop-color="#6d6d6d"/>
<stop offset="0.1457" stop-color="#7c7c7c"/>
<stop offset="0.1680" stop-color="#8b8b8b"/>
<stop offset="0.1919" stop-color="#9a9a9a"/>
<stop offset="0.2176" stop-color="#a8a8a8"/>
<stop offset="0.2451" stop-color="#b6b6b6"/>
<stop offset="0.2744" stop-color="#c3c3c3"/>
<stop offset="0.3055" stop-color="#cfcfcf"/>
<stop offset="0.3384" stop-color="#dadada"/>
<stop offset="0.3732" stop-color="#e3e3e3"/>
<stop offset="0.4098" stop-color="#ebebeb"/>
<stop offset="0.4483" stop-color="#f1f1f1"/>
<stop offset="0.4887" stop-color="#f6f6f6"/>
<stop offset="0.5310" stop-color="#f9f9f9"/>
<stop offset="0.5753" stop-color="#fbfbfb"/>
<stop offset="0.6215" stop-color="#fdfdfd"/>
<stop offset="0.6696" stop-color="#fefefe"/>
<stop offset="0.7197" stop-color="#fefefe"/>
<stop offset="0.7717" stop-color="#ffffff"/>
<stop offset="0.8258" stop-color="#ffffff"/>
<stop offset="0.8818" stop-color="#ffffff"/>
<stop offset="0.9399" stop-color="#ffffff"/>
<stop offset="1.0000" stop-color="#ffffff"/>
</linearGradient>
<mask id="m1" maskUnits="userSpaceOnUse" x="666" y="27" width="920" height="960"><rect x="666" y="68.6" width="920" height="918.4" fill="url(#g1)"/></mask>
<mask id="m10" maskUnits="userSpaceOnUse" x="666" y="27" width="920" height="960"><rect x="666" y="68.6" width="920" height="918.4" fill="url(#g10)"/></mask>
<path id="gr1" d="M665.0 79.4L665.1 79.3M665.0 79.8L667.7 79.3M665.0 80.3L670.3 79.3M665.0 80.9L672.8 79.3M665.0 81.5L675.4 79.3M665.0 82.1L678.0 79.3M665.0 82.9L680.5 79.3M665.0 83.7L683.1 79.2M665.0 85.7L688.2 79.2M665.0 86.9L690.7 79.2M665.0 88.3L693.3 79.2M665.0 89.9L695.8 79.2M665.0 91.8L698.3 79.2M665.0 94.1L700.8 79.2M665.0 96.9L703.3 79.1M665.0 100.3L705.8 79.1M665.0 104.7L708.3 79.1M665.0 118.7L713.3 79.1M665.0 130.7L715.7 79.1M665.0 150.2L718.2 79.1M665.0 187.6L720.7 79.0M665.0 288.3L723.1 79.0M1558.1 987.0L1586.0 964.8M687.0 987.0L725.6 79.0M1128.2 987.0L1586.0 721.1M903.1 987.0L728.0 79.0M698.2 987.0L1586.0 581.7M1119.2 987.0L730.5 79.0M665.0 837.8L1586.0 491.3M1335.2 987.0L732.9 79.0M665.0 722.6L1586.0 428.0M1586.0 827.0L737.7 79.0M665.0 571.9L1586.0 345.2M1586.0 696.7L740.1 78.9M665.0 519.9L1586.0 316.6M1586.0 604.6L742.6 78.9M665.0 477.6L1586.0 293.4M1586.0 536.1L745.0 78.9M665.0 442.6L1586.0 274.1M1586.0 483.1L747.4 78.9M665.0 413.1L1586.0 257.9M1586.0 440.9L749.7 78.9M665.0 387.9L1586.0 244.1M1586.0 406.4L752.1 78.9M665.0 366.2L1586.0 232.1M1586.0 377.9L754.5 78.9M665.0 347.2L1586.0 221.7M1586.0 353.7L756.9 78.9M665.0 330.5L1586.0 212.5M1586.0 315.3L761.6 78.8M665.0 302.4L1586.0 197.1M1586.0 299.7L764.0 78.8M665.0 290.6L1586.0 190.6M1586.0 285.9L766.3 78.8M665.0 279.8L1586.0 184.7M1586.0 273.7L768.7 78.8M665.0 270.1L1586.0 179.3M1586.0 262.8L771.0 78.8M665.0 261.2L1586.0 174.5M1586.0 253.0L773.3 78.8M665.0 253.1L1586.0 170.0M1586.0 244.2L775.7 78.8M665.0 245.6L1586.0 165.9M1586.0 236.1L778.0 78.7M665.0 238.7L1586.0 162.1M1586.0 228.8L780.3 78.7M665.0 232.3L1586.0 158.6M1586.0 215.9L784.9 78.7M665.0 220.9L1586.0 152.3M1586.0 210.2L787.2 78.7M665.0 215.8L1586.0 149.5M1586.0 204.9L789.5 78.7M665.0 211.0L1586.0 146.9M1586.0 200.0L791.8 78.7M665.0 206.5L1586.0 144.4M1586.0 195.5L794.1 78.7M665.0 202.3L1586.0 142.1M1586.0 191.2L796.4 78.6M665.0 198.3L1586.0 139.9M1586.0 187.2L798.6 78.6M665.0 194.6L1586.0 137.8M1586.0 183.5L800.9 78.6M665.0 191.0L1586.0 135.9M1586.0 180.0L803.2 78.6M665.0 187.7L1586.0 134.1M1586.0 173.6L807.7 78.6M665.0 181.5L1586.0 130.7M1586.0 170.7L809.9 78.6M665.0 178.7L1586.0 129.1M1586.0 167.9L812.1 78.6M665.0 176.0L1586.0 127.6M1586.0 165.3L814.4 78.6M665.0 173.4L1586.0 126.2M1586.0 162.8L816.6 78.5M665.0 171.0L1586.0 124.9M1586.0 160.4L818.8 78.5M665.0 168.6L1586.0 123.6M1586.0 158.2L821.1 78.5M665.0 166.4L1586.0 122.3M1586.0 156.0L823.3 78.5M665.0 164.2L1586.0 121.2M1586.0 154.0L825.5 78.5M665.0 162.2L1586.0 120.0M1586.0 150.2L829.9 78.5M665.0 158.3L1586.0 117.9M1586.0 148.4L832.1 78.5M665.0 156.5L1586.0 116.9M1586.0 146.7L834.3 78.5M665.0 154.8L1586.0 116.0M1586.0 145.1L836.4 78.4M665.0 153.1L1586.0 115.1M1586.0 143.5L838.6 78.4M665.0 151.5L1586.0 114.2M1586.0 142.0L840.8 78.4M665.0 150.0L1586.0 113.3M1586.0 140.5L843.0 78.4M665.0 148.5L1586.0 112.5M1586.0 139.2L845.1 78.4M665.0 147.1L1586.0 111.7M1586.0 137.8L847.3 78.4M665.0 145.7L1586.0 111.0M1586.0 135.3L851.6 78.4M665.0 143.1L1586.0 109.5M1586.0 134.1L853.7 78.3M665.0 141.8L1586.0 108.8M1586.0 133.0L855.9 78.3M665.0 140.6L1586.0 108.2M1586.0 131.8L858.0 78.3M665.0 139.4L1586.0 107.5M1586.0 130.8L860.1 78.3M665.0 138.3L1586.0 106.9M1586.0 129.7L862.3 78.3M665.0 137.2L1586.0 106.3M1586.0 128.7L864.4 78.3M665.0 136.1L1586.0 105.7M1586.0 127.7L866.5 78.3M665.0 135.1L1586.0 105.2M1586.0 126.8L868.6 78.3M665.0 134.1L1586.0 104.6M1586.0 125.0L872.8 78.2M665.0 132.2L1586.0 103.6M1586.0 124.2L874.9 78.2M665.0 131.3L1586.0 103.1M1586.0 123.3L877.0 78.2M665.0 130.4L1586.0 102.6M1586.0 122.5L879.1 78.2M665.0 129.6L1586.0 102.1M1586.0 121.7L881.1 78.2M665.0 128.7L1586.0 101.6M1586.0 121.0L883.2 78.2M665.0 127.9L1586.0 101.2M1586.0 120.2L885.3 78.2M665.0 127.1L1586.0 100.8M1586.0 119.5L887.4 78.2M665.0 126.3L1586.0 100.3M1586.0 118.8L889.4 78.2M665.0 125.6L1586.0 99.9"/><path id="gr10" d="M665.0 84.7L685.6 79.2M665.0 110.6L710.8 79.1M1586.0 333.1L759.2 78.8M665.0 315.7L1586.0 204.4M1586.0 222.1L782.6 78.7M665.0 226.4L1586.0 155.3M1586.0 176.7L805.4 78.6M665.0 184.5L1586.0 132.3M1586.0 152.0L827.7 78.5M665.0 160.2L1586.0 119.0M1586.0 136.5L849.4 78.4M665.0 144.3L1586.0 110.2M1586.0 125.9L870.7 78.3M665.0 133.2L1586.0 104.1M1586.0 118.1L891.5 78.2M665.0 124.8L1586.0 99.5M1586.0 112.2L824.3 73.6M665.0 118.4L1586.0 96.0M1586.0 107.6L835.4 73.6M665.0 113.3L1586.0 93.2M1586.0 103.8L846.4 73.6M665.0 109.2L1586.0 90.9M1586.0 100.7L857.2 73.5M665.0 105.7L1586.0 89.0M1586.0 98.1L867.9 73.5M665.0 102.8L1586.0 87.4M1586.0 95.9L878.5 73.5M665.0 100.3L1586.0 86.1M1586.0 94.0L889.0 73.4M665.0 98.2L1586.0 84.9M1586.0 92.4L899.3 73.4M665.0 96.3L1586.0 83.8M1586.0 90.9L909.5 73.4M665.0 94.7L1586.0 82.9M1586.0 89.7L919.6 73.4M665.0 93.2L1586.0 82.1M1586.0 88.5L929.6 73.3M665.0 91.9L1586.0 81.4M1586.0 87.5L939.5 73.3M665.0 90.7L1586.0 80.8M1586.0 86.6L949.3 73.3M665.0 89.7L1586.0 80.2M1586.0 85.7L958.9 73.3M665.0 88.7L1586.0 79.7M1586.0 85.0L968.5 73.2M665.0 87.8L1586.0 79.2M1586.0 84.3L978.0 73.2M665.0 87.0L1586.0 78.7M1586.0 83.6L987.3 73.2M665.0 86.3L1586.0 78.3M1586.0 83.0L996.6 73.2M665.0 85.6L1586.0 77.9M1586.0 82.5L1005.7 73.1M665.0 84.9L1586.0 77.6M1586.0 82.0L1014.8 73.1M665.0 84.4L1586.0 77.3M1586.0 81.5L1023.8 73.1M665.0 83.8L1586.0 77.0M1586.0 81.1L1032.6 73.1M665.0 83.3L1586.0 76.7M1586.0 80.7L1041.4 73.0M665.0 82.8L1586.0 76.4M1586.0 80.3L1050.1 73.0M665.0 82.4L1586.0 76.2M1586.0 79.9L1058.7 73.0M665.0 82.0L1586.0 75.9M1586.0 79.6L1067.2 73.0M665.0 81.6L1586.0 75.7M1586.0 79.3L1075.6 72.9M665.0 81.2L1586.0 75.5M1586.0 79.0L1083.9 72.9M665.0 80.8L1586.0 75.3M1586.0 78.7L1092.2 72.9M665.0 80.5L1586.0 75.2M1586.0 78.4L1100.3 72.9M665.0 80.2L1586.0 75.0M1586.0 78.1L1108.4 72.9M665.0 79.9L1586.0 74.8M1586.0 77.9L1116.4 72.8M665.0 79.6L1586.0 74.7M1586.0 77.7L1124.4 72.8M665.0 79.3L1586.0 74.5"/><path id="gax" d="M665.0 637.4L1586.0 381.2"/><path id="gay" d="M1551.3 987.0L730.7 73.9"/>
</defs>
<g fill="none">
<g mask="url(#m1)"><use href="#gr1" stroke="#585858" stroke-width="1.2" stroke-opacity="0.66"/></g>
<g mask="url(#m10)"><use href="#gr10" stroke="#5b5b5b" stroke-width="1.2" stroke-opacity="0.8"/>
<use href="#gax" stroke="#a53c4f" stroke-width="1.5" stroke-opacity="1"/><use href="#gay" stroke="#6f9a27" stroke-width="1.5" stroke-opacity="1"/></g>
</g>
<path d="M1022.1 438.9L1027.0 447.9L1041.9 608.0L1037.3 597.0 Z" fill="rgb(166,142,124)" stroke="rgb(166,142,124)" stroke-width="0.6"/>
<path d="M1027.0 447.9L1036.2 456.6L1049.9 618.4L1041.9 608.0 Z" fill="rgb(166,142,124)" stroke="rgb(166,142,124)" stroke-width="0.6"/>
<path d="M1036.2 456.6L1049.4 464.3L1061.3 627.6L1049.9 618.4 Z" fill="rgb(167,143,125)" stroke="rgb(167,143,125)" stroke-width="0.6"/>
<path d="M1049.4 464.3L1066.3 470.6L1075.7 635.2L1061.3 627.6 Z" fill="rgb(167,143,125)" stroke="rgb(167,143,125)" stroke-width="0.6"/>
<path d="M1066.3 470.6L1086.1 475.2L1092.4 640.6L1075.7 635.2 Z" fill="rgb(166,141,123)" stroke="rgb(166,141,123)" stroke-width="0.6"/>
<path d="M1086.1 475.2L1107.8 477.7L1110.7 643.6L1092.4 640.6 Z" fill="rgb(163,137,118)" stroke="rgb(163,137,118)" stroke-width="0.6"/>
<path d="M1107.8 477.7L1130.3 478.0L1129.6 643.9L1110.7 643.6 Z" fill="rgb(160,133,113)" stroke="rgb(160,133,113)" stroke-width="0.6"/>
<path d="M1130.3 478.0L1152.4 476.0L1148.2 641.6L1129.6 643.9 Z" fill="rgb(155,126,105)" stroke="rgb(155,126,105)" stroke-width="0.6"/>
<path d="M1152.4 476.0L1172.9 472.0L1165.5 636.8L1148.2 641.6 Z" fill="rgb(150,120,96)" stroke="rgb(150,120,96)" stroke-width="0.6"/>
<path d="M1172.9 472.0L1190.7 466.0L1180.6 629.7L1165.5 636.8 Z" fill="rgb(145,113,87)" stroke="rgb(145,113,87)" stroke-width="0.6"/>
<path d="M1190.7 466.0L1205.1 458.6L1192.9 620.9L1180.6 629.7 Z" fill="rgb(137,104,73)" stroke="rgb(137,104,73)" stroke-width="0.6"/>
<path d="M1205.1 458.6L1215.5 450.2L1202.0 610.8L1192.9 620.9 Z" fill="rgb(130,96,62)" stroke="rgb(130,96,62)" stroke-width="0.6"/>
<path d="M1215.5 450.2L1221.7 441.2L1207.6 599.9L1202.0 610.8 Z" fill="rgb(125,90,56)" stroke="rgb(125,90,56)" stroke-width="0.6"/>
<path d="M1221.7 441.2L1223.8 432.1L1209.6 588.7L1207.6 599.9 Z" fill="rgb(121,86,51)" stroke="rgb(121,86,51)" stroke-width="0.6"/>
<defs><clipPath id="clow"><path d="M1030.3 524.2L1035.0 534.5L1043.6 544.2L1055.9 552.8L1071.4 559.9L1089.5 565.0L1109.4 567.9L1130.0 568.2L1150.1 566.0L1168.9 561.4L1185.2 554.8L1198.5 546.5L1208.2 537.0L1214.1 526.9L1216.1 516.5L1209.6 588.7L1207.6 599.9L1202.0 610.8L1192.9 620.9L1180.6 629.7L1165.5 636.8L1148.2 641.6L1129.6 643.9L1110.7 643.6L1092.4 640.6L1075.7 635.2L1061.3 627.6L1049.9 618.4L1041.9 608.0L1037.3 597.0 Z"/></clipPath></defs>
<g clip-path="url(#clow)">
<g fill="none">
<g mask="url(#m1)"><use href="#gr1" stroke="#7d6757" stroke-width="1.2" stroke-opacity="0.33"/></g>
<g mask="url(#m10)"><use href="#gr10" stroke="#7d6757" stroke-width="1.2" stroke-opacity="0.4"/>
<use href="#gax" stroke="#a53c4f" stroke-width="1.5" stroke-opacity="0.62"/><use href="#gay" stroke="#6f9a27" stroke-width="1.5" stroke-opacity="0.62"/></g>
</g>
</g>
<path d="M1207.7 407.2L1196.3 400.7L1182.8 395.2L1167.5 391.0L1151.1 388.1L1133.8 386.6L1116.3 386.4L1099.0 387.6L1082.3 390.1L1066.6 394.0L1052.5 399.1L1040.4 405.4L1030.8 412.8L1024.3 421.0L1021.2 429.8L1022.1 438.9L1027.0 447.9L1036.2 456.6L1049.4 464.3L1066.3 470.6L1086.1 475.2L1107.8 477.7L1130.3 478.0L1152.4 476.0L1172.9 472.0L1190.7 466.0L1205.1 458.6L1215.5 450.2L1221.7 441.2L1223.8 432.1L1221.8 423.2L1216.3 414.8 Z" fill="#b09887"/>
<path d="M1207.7 407.2L1196.3 400.7L1182.8 395.2L1167.5 391.0L1151.1 388.1L1133.8 386.6L1116.3 386.4L1099.0 387.6L1082.3 390.1L1066.6 394.0L1052.5 399.1L1040.4 405.4L1030.8 412.8L1024.3 421.0L1021.2 429.8L1022.1 438.9L1027.0 447.9L1036.2 456.6L1049.4 464.3L1066.3 470.6L1086.1 475.2L1107.8 477.7L1130.3 478.0L1152.4 476.0L1172.9 472.0L1190.7 466.0L1205.1 458.6L1215.5 450.2L1221.7 441.2L1223.8 432.1L1221.8 423.2L1216.3 414.8ZM1037.3 597.0L1041.9 608.0L1049.9 618.4L1061.3 627.6L1075.7 635.2L1092.4 640.6L1110.7 643.6L1129.6 643.9L1148.2 641.6L1165.5 636.8L1180.6 629.7L1192.9 620.9L1202.0 610.8L1207.6 599.9L1209.6 588.7M1022.1 438.9L1037.3 597.0M1027.0 447.9L1041.9 608.0M1036.2 456.6L1049.9 618.4M1049.4 464.3L1061.3 627.6M1066.3 470.6L1075.7 635.2M1086.1 475.2L1092.4 640.6M1107.8 477.7L1110.7 643.6M1130.3 478.0L1129.6 643.9M1152.4 476.0L1148.2 641.6M1172.9 472.0L1165.5 636.8M1190.7 466.0L1180.6 629.7M1205.1 458.6L1192.9 620.9M1215.5 450.2L1202.0 610.8M1221.7 441.2L1207.6 599.9M1223.8 432.1L1209.6 588.7" fill="none" stroke="#ff9d1e" stroke-width="1" stroke-linejoin="round"/>
<circle cx="1207.7" cy="407.2" r="1.9" fill="#ff7c0a"/>
<circle cx="1196.3" cy="400.7" r="1.9" fill="#ff7c0a"/>
<circle cx="1182.8" cy="395.2" r="1.9" fill="#ff7c0a"/>
<circle cx="1167.5" cy="391.0" r="1.9" fill="#ff7c0a"/>
<circle cx="1151.1" cy="388.1" r="1.9" fill="#ff7c0a"/>
<circle cx="1133.8" cy="386.6" r="1.9" fill="#ff7c0a"/>
<circle cx="1116.3" cy="386.4" r="1.9" fill="#ff7c0a"/>
<circle cx="1099.0" cy="387.6" r="1.9" fill="#ff7c0a"/>
<circle cx="1082.3" cy="390.1" r="1.9" fill="#ff7c0a"/>
<circle cx="1066.6" cy="394.0" r="1.9" fill="#ff7c0a"/>
<circle cx="1052.5" cy="399.1" r="1.9" fill="#ff7c0a"/>
<circle cx="1040.4" cy="405.4" r="1.9" fill="#ff7c0a"/>
<circle cx="1030.8" cy="412.8" r="1.9" fill="#ff7c0a"/>
<circle cx="1024.3" cy="421.0" r="1.9" fill="#ff7c0a"/>
<circle cx="1021.2" cy="429.8" r="1.9" fill="#ff7c0a"/>
<circle cx="1022.1" cy="438.9" r="1.9" fill="#ff7c0a"/>
<circle cx="1027.0" cy="447.9" r="1.9" fill="#ff7c0a"/>
<circle cx="1036.2" cy="456.6" r="1.9" fill="#ff7c0a"/>
<circle cx="1049.4" cy="464.3" r="1.9" fill="#ff7c0a"/>
<circle cx="1066.3" cy="470.6" r="1.9" fill="#ff7c0a"/>
<circle cx="1086.1" cy="475.2" r="1.9" fill="#ff7c0a"/>
<circle cx="1107.8" cy="477.7" r="1.9" fill="#ff7c0a"/>
<circle cx="1130.3" cy="478.0" r="1.9" fill="#ff7c0a"/>
<circle cx="1152.4" cy="476.0" r="1.9" fill="#ff7c0a"/>
<circle cx="1172.9" cy="472.0" r="1.9" fill="#ff7c0a"/>
<circle cx="1190.7" cy="466.0" r="1.9" fill="#ff7c0a"/>
<circle cx="1205.1" cy="458.6" r="1.9" fill="#ff7c0a"/>
<circle cx="1215.5" cy="450.2" r="1.9" fill="#ff7c0a"/>
<circle cx="1221.7" cy="441.2" r="1.9" fill="#ff7c0a"/>
<circle cx="1223.8" cy="432.1" r="1.9" fill="#ff7c0a"/>
<circle cx="1221.8" cy="423.2" r="1.9" fill="#ff7c0a"/>
<circle cx="1216.3" cy="414.8" r="1.9" fill="#ff7c0a"/>
<circle cx="1037.3" cy="597.0" r="1.9" fill="#ff7c0a"/>
<circle cx="1041.9" cy="608.0" r="1.9" fill="#ff7c0a"/>
<circle cx="1049.9" cy="618.4" r="1.9" fill="#ff7c0a"/>
<circle cx="1061.3" cy="627.6" r="1.9" fill="#ff7c0a"/>
<circle cx="1075.7" cy="635.2" r="1.9" fill="#ff7c0a"/>
<circle cx="1092.4" cy="640.6" r="1.9" fill="#ff7c0a"/>
<circle cx="1110.7" cy="643.6" r="1.9" fill="#ff7c0a"/>
<circle cx="1129.6" cy="643.9" r="1.9" fill="#ff7c0a"/>
<circle cx="1148.2" cy="641.6" r="1.9" fill="#ff7c0a"/>
<circle cx="1165.5" cy="636.8" r="1.9" fill="#ff7c0a"/>
<circle cx="1180.6" cy="629.7" r="1.9" fill="#ff7c0a"/>
<circle cx="1192.9" cy="620.9" r="1.9" fill="#ff7c0a"/>
<circle cx="1202.0" cy="610.8" r="1.9" fill="#ff7c0a"/>
<circle cx="1207.6" cy="599.9" r="1.9" fill="#ff7c0a"/>
<circle cx="1209.6" cy="588.7" r="1.9" fill="#ff7c0a"/>
<circle cx="1036.3" cy="585.9" r="1.9" fill="#ff7c0a"/>
<g transform="translate(1122.7,510.1)">
<path d="M3.4 -0.9L17.3 -4.8M-3.4 0.9L-17.3 4.8M-2.3 -2.6L-8.0 -8.9M2.3 2.6L8.0 8.9" fill="none" stroke="#141414" stroke-width="1"/>
<path d="M0 -16.5V-4.5M0 4.5V16.5" fill="none" stroke="#4a3a2e" stroke-width="1.3"/>
<circle r="10.2" fill="none" stroke="#ffffff" stroke-width="1.3"/>
<circle r="10.2" fill="none" stroke="#f03030" stroke-width="1.3" stroke-dasharray="4 4"/>
<circle r="2.5" fill="#ffa01f" stroke="#c87a18" stroke-width="0.6"/>
</g>
</g>
<g clip-path="url(#c3d)">
<rect x="666" y="27" width="920" height="26" fill="#303030" fill-opacity="0.7"/>
<path d="M666 53H813V73.5a4 4 0 0 1 -4 4H666Z" fill="#303030" fill-opacity="0.7"/>
<path d="M1586 53H1401V73.5a4 4 0 0 0 4 4H1586Z" fill="#303030" fill-opacity="0.7"/>
<rect x="675.5" y="29.5" width="29" height="19" fill="#282828" rx="4" stroke="#464646" stroke-width="1"/>
<g fill="none" stroke="#e6e6e6" stroke-width="1.1">
<path d="M679 39.5H694M680.5 44H692.5M683.5 36.5L681.5 47M690 39.5L691.5 47" fill="none" stroke="#e6e6e6" stroke-width="1.1"/>
<circle cx="690.2" cy="35.6" r="2.7" fill="#e6e6e6" stroke="none"/><circle cx="689.4" cy="34.8" r="1" fill="#ffffff" stroke="none"/>
</g>
<path d="M695.5 38.5L698.5 41.8L701.5 38.5" fill="none" stroke="#e6e6e6" stroke-width="1.3" stroke-linecap="round" stroke-linejoin="round"/>
<rect x="712.5" y="29.5" width="95" height="19" fill="#282828" rx="4" stroke="#464646" stroke-width="1"/>
<g fill="none" stroke="#e6e6e6" stroke-width="1">
<path d="M718.5 35.5H723.5M718 37V44M719.5 46H726.5M728 44.5V40"/>
<rect x="716.6" y="34" width="2.8" height="2.8" rx="0.6"/><rect x="716.6" y="44.6" width="2.8" height="2.8" rx="0.6"/><rect x="726.6" y="44.6" width="2.8" height="2.8" rx="0.6"/>
<rect x="725" y="32.4" width="4.6" height="4.6" fill="#fff" stroke="none"/>
</g>
<text x="737.5" y="43" fill="#e6e6e6" font-size="11.2" textLength="53.8" lengthAdjust="spacingAndGlyphs">Edit Mode</text>
<path d="M799 38.5L802 41.8L805 38.5" fill="none" stroke="#e6e6e6" stroke-width="1.3" stroke-linecap="round" stroke-linejoin="round"/>
<clipPath id="gc7"><rect x="815" y="30" width="57" height="18" rx="3.5"/></clipPath>
<g clip-path="url(#gc7)">
<rect x="814" y="29" width="20" height="20" fill="#4772b3"/>
<rect x="834" y="29" width="19" height="20" fill="#545454"/>
<rect x="853" y="29" width="20" height="20" fill="#545454"/>
<rect x="833.5" y="29" width="1" height="20" fill="#3e3e3e"/>
<rect x="852.5" y="29" width="1" height="20" fill="#3e3e3e"/>
</g>
<path d="M820 36V33.5H832.5V42.5L829 45.5H820V41" fill="none" stroke="#e6e6e6" stroke-width="1"/>
<rect x="816.8" y="36.6" width="3.6" height="3.6" fill="#ffffff"/>
<path d="M843 45.5H838.5V36.5L841.5 33.5H851.5V42.5L849.5 45" fill="none" stroke="#b8b8b8" stroke-width="1"/>
<rect x="844.6" y="36" width="3" height="10.4" fill="#e6e6e6"/>
<path d="M859 34.5L860 33.5H870.5V42.5L868.5 44" fill="none" stroke="#b8b8b8" stroke-width="1"/>
<rect x="856.4" y="36" width="9.4" height="10.4" fill="#e6e6e6"/>
<text x="886.25" y="43" fill="#e6e6e6" font-size="11.2" textLength="25.6" lengthAdjust="spacingAndGlyphs">View</text>
<text x="927.25" y="43" fill="#e6e6e6" font-size="11.2" textLength="31.5" lengthAdjust="spacingAndGlyphs">Select</text>
<text x="974.1" y="43" fill="#e6e6e6" font-size="11.2" textLength="21.5" lengthAdjust="spacingAndGlyphs">Add</text>
<text x="1011.25" y="43" fill="#e6e6e6" font-size="11.2" textLength="28.2" lengthAdjust="spacingAndGlyphs">Mesh</text>
<text x="1055" y="43" fill="#e6e6e6" font-size="11.2" textLength="33.8" lengthAdjust="spacingAndGlyphs">Vertex</text>
<text x="1104.4" y="43" fill="#e6e6e6" font-size="11.2" textLength="26.8" lengthAdjust="spacingAndGlyphs">Edge</text>
<text x="1146.25" y="43" fill="#e6e6e6" font-size="11.2" textLength="25.0" lengthAdjust="spacingAndGlyphs">Face</text>
<text x="1186.25" y="43" fill="#e6e6e6" font-size="11.2" textLength="15.0" lengthAdjust="spacingAndGlyphs">UV</text>
<rect x="1227.5" y="29.5" width="75" height="19" fill="#282828" rx="4" stroke="#464646" stroke-width="1"/>
<g fill="none" stroke="#e6e6e6" stroke-width="1" stroke-linecap="round" stroke-linejoin="round">
<path d="M1233.7 41.6V33M1231.6 35L1233.7 32.6L1235.8 35M1235.4 43.4H1244.4M1242.4 41.4L1244.8 43.4L1242.4 45.4"/>
<path d="M1235 42L1241.4 35.6M1238.4 35.4H1241.6V38.6" stroke="#a8a8a8" stroke-width="0.9"/>
<circle cx="1233.7" cy="43.4" r="1.6"/>
</g>
<text x="1252" y="43" fill="#e6e6e6" font-size="11.2" textLength="34.0" lengthAdjust="spacingAndGlyphs">Global</text>
<path d="M1294 38.5L1297 41.8L1300 38.5" fill="none" stroke="#e6e6e6" stroke-width="1.3" stroke-linecap="round" stroke-linejoin="round"/>
<rect x="1310.5" y="29.5" width="29" height="19" fill="#282828" rx="4" stroke="#464646" stroke-width="1"/>
<g fill="none" stroke="#e6e6e6" stroke-width="1.3">
<path d="M1319.2 35.2A4.4 4.4 0 1 1 1324.6 41"/><path d="M1322.4 43.6A4.2 4.2 0 1 1 1317 37.8"/>
<circle cx="1321.1" cy="38.8" r="1.3" fill="#e6e6e6" stroke="none"/>
</g>
<path d="M1330.5 38.5L1333.5 41.8L1336.5 38.5" fill="none" stroke="#e6e6e6" stroke-width="1.3" stroke-linecap="round" stroke-linejoin="round"/>
<g transform="translate(0,-1)">
<rect x="1346" y="30" width="51.5" height="20" fill="#464646" rx="4.5"/>
<rect x="1346" y="29.8" width="19.5" height="20.4" fill="#353535"/>
<clipPath id="gc8"><rect x="1347" y="31" width="49.5" height="18" rx="3.5"/></clipPath>
<g clip-path="url(#gc8)">
<rect x="1346" y="30" width="19.5" height="20" fill="#545454"/>
<rect x="1365.5" y="30" width="32" height="20" fill="#282828"/>
<rect x="1365" y="30" width="1" height="20" fill="#3e3e3e"/>
</g>
<g transform="translate(1348.9,32.4) scale(1.1)" fill="none" stroke="#b4b4b4" stroke-width="1.05" stroke-linecap="round">
<path d="M1 5.2L5.2 1.6A4.6 4.6 0 0 1 12.6 7.2L8.4 12.6L5.8 10.6L9.6 5.8A1.4 1.4 0 0 0 7.4 4L3.2 7.6Z"/>
</g>
<path d="M1369.3 38.8V46M1369.3 42.4H1381.7M1373.4 40.4V44.4M1377.6 40.4V44.4M1381.7 38.8V46" fill="none" stroke="#e6e6e6" stroke-width="1.1"/>
<rect x="1379.5" y="33" width="4" height="3.8" fill="#e6e6e6"/>
<path d="M1387.5 39.5L1390.5 42.8L1393.5 39.5" fill="none" stroke="#e6e6e6" stroke-width="1.3" stroke-linecap="round" stroke-linejoin="round"/>
</g>
<g transform="translate(0,-1)">
<rect x="1403" y="30" width="51" height="20" fill="#464646" rx="4.5"/>
<rect x="1403" y="29.8" width="19.5" height="20.4" fill="#353535"/>
<clipPath id="gc9"><rect x="1404" y="31" width="49" height="18" rx="3.5"/></clipPath>
<g clip-path="url(#gc9)">
<rect x="1403" y="30" width="19.5" height="20" fill="#545454"/>
<rect x="1422.5" y="30" width="31.5" height="20" fill="#282828"/>
<rect x="1422" y="30" width="1" height="20" fill="#3e3e3e"/>
</g>
<circle cx="1413.55" cy="39.7" r="6.3" fill="none" stroke="#a0a0a0" stroke-width="1"/>
<circle cx="1413.55" cy="39.7" r="1.8" fill="#e6e6e6"/>
<path d="M1427.1 45.5C1431.1 45.5 1430.6 33.5 1434.1 33.5C1437.6 33.5 1437.1 45.5 1441.1 45.5" fill="none" stroke="#6a6a6a" stroke-width="1.1"/>
<path d="M1444 39.5L1447 42.8L1450 39.5" fill="none" stroke="#555555" stroke-width="1.3" stroke-linecap="round" stroke-linejoin="round"/>
</g>
<rect x="1472.5" y="29.5" width="29" height="19" fill="#282828" rx="4" stroke="#464646" stroke-width="1"/>
<g>
<path d="M1476.6 37.6L1478 46.4L1480.4 43.8L1483.2 46.2L1484.2 43.4Z" fill="#e6e6e6"/>
<path d="M1478.2 36.2C1480 33.4 1482.6 32.4 1484.6 32.4C1487 32.4 1489.4 33.6 1491 36.2C1489.4 38.8 1487 40 1484.6 40C1483.4 40 1482.4 39.8 1481.4 39.2" fill="none" stroke="#e6e6e6" stroke-width="1.2"/>
<circle cx="1484.6" cy="36.2" r="2" fill="#e6e6e6"/>
</g>
<path d="M1492.5 38.5L1495.5 41.8L1498.5 38.5" fill="none" stroke="#e6e6e6" stroke-width="1.3" stroke-linecap="round" stroke-linejoin="round"/>
<rect x="1508" y="29" width="39" height="20" fill="#464646" rx="4.5"/>
<rect x="1508" y="28.8" width="19.5" height="20.4" fill="#353535"/>
<clipPath id="gc10"><rect x="1509" y="30" width="37" height="18" rx="3.5"/></clipPath>
<g clip-path="url(#gc10)">
<rect x="1508" y="29" width="19.5" height="20" fill="#4772b3"/>
<rect x="1527.5" y="29" width="19.5" height="20" fill="#282828"/>
<rect x="1527" y="29" width="1" height="20" fill="#3e3e3e"/>
</g>
<g fill="none" stroke="#ffffff" stroke-width="1.2" stroke-linecap="round" stroke-linejoin="round">
<path d="M1512.6 35C1517.5 35.5 1521.5 39.5 1522.5 45.8"/><path d="M1514.8 43.4L1523 33.6M1519.4 33.2H1523.4V37.2"/>
<circle cx="1513.6" cy="44.6" r="1.7"/>
</g>
<path d="M1534.5 38.5L1537.5 41.8L1540.5 38.5" fill="none" stroke="#e6e6e6" stroke-width="1.3" stroke-linecap="round" stroke-linejoin="round"/>
<rect x="1553" y="29" width="47" height="20" fill="#464646" rx="4.5"/>
<rect x="1553" y="28.8" width="19.5" height="20.4" fill="#353535"/>
<clipPath id="gc11"><rect x="1554" y="30" width="45" height="18" rx="3.5"/></clipPath>
<g clip-path="url(#gc11)">
<rect x="1553" y="29" width="19.5" height="20" fill="#4772b3"/>
<rect x="1572.5" y="29" width="27.5" height="20" fill="#282828"/>
<rect x="1572" y="29" width="1" height="20" fill="#3e3e3e"/>
</g>
<circle cx="1564.6" cy="38" r="5.6" fill="#ffffff"/>
<path d="M1563.4 35.2a2 2 0 0 1 2.6 0.8M1565.6 38.6a1.6 1.6 0 0 0 2 -0.4" stroke="#4772b3" stroke-width="0.9" fill="none"/>
<circle cx="1560.6" cy="41.6" r="4.4" fill="#4772b3" stroke="#ffffff" stroke-width="1.2"/>
<path d="M1579 38.5L1582 41.8L1585 38.5" fill="none" stroke="#e6e6e6" stroke-width="1.3" stroke-linecap="round" stroke-linejoin="round"/>
<rect x="680.8" y="56.2" width="18.6" height="18.2" rx="2" fill="none" stroke="#e0a22e" stroke-width="1.7" stroke-dasharray="3.4 1.5"/>
<path d="M686.8 60.6L694.4 65.4L690.4 66.2L688.2 69.8Z" fill="#e6e6e6"/>
<clipPath id="gc12"><rect x="710" y="56" width="94" height="18" rx="3.5"/></clipPath>
<g clip-path="url(#gc12)">
<rect x="709" y="55" width="19.5" height="20" fill="#4772b3"/>
<rect x="728.5" y="55" width="19" height="20" fill="#545454"/>
<rect x="747.5" y="55" width="19" height="20" fill="#545454"/>
<rect x="766.5" y="55" width="19" height="20" fill="#545454"/>
<rect x="785.5" y="55" width="19" height="20" fill="#545454"/>
<rect x="728" y="55" width="1" height="20" fill="#3e3e3e"/>
<rect x="747" y="55" width="1" height="20" fill="#3e3e3e"/>
<rect x="766" y="55" width="1" height="20" fill="#3e3e3e"/>
<rect x="785" y="55" width="1" height="20" fill="#3e3e3e"/>
</g>
<rect x="713.4" y="58.9" width="12.4" height="12.4" fill="none" stroke="#ffffff" stroke-width="1.3" stroke-dasharray="2 1.46"/>
<path d="M737.8 59H745V66H740.4V71H732.4V64.4H737.8Z" fill="#c8c8c8"/>
<path d="M755.6 59.2H763.4V66.6H758.6V62.8H755.6Z" fill="#c8c8c8"/>
<rect x="751.8" y="63.6" width="8" height="7.4" fill="none" stroke="#c8c8c8" stroke-width="1" stroke-dasharray="1.8 1.2"/>
<path d="M775 59H783V66.4H779V70.8H771V63.4H775Z M775.2 63.4V66.4H779V63.4Z" fill="#c8c8c8" fill-rule="evenodd"/>
<rect x="789.4" y="58.9" width="12.4" height="12.4" fill="none" stroke="#c8c8c8" stroke-width="1.1" stroke-dasharray="2 1.46"/>
<rect x="792.8" y="62.2" width="5.6" height="5.8" fill="#c8c8c8"/>
<g fill="none" stroke="#c8c8c8" stroke-width="1" stroke-linecap="round">
<path d="M1416.4 59.6C1413 56.8 1411 58.8 1412.4 62C1413.2 63.8 1414.6 64.4 1413.4 66.2C1411.4 69.4 1413.4 72 1416.4 70"/>
<path d="M1420.8 59.6C1424.2 56.8 1426.2 58.8 1424.8 62C1424 63.8 1422.6 64.4 1423.8 66.2C1425.8 69.4 1423.8 72 1420.8 70"/>
<path d="M1418.6 57V73.4" stroke="#e6e6e6" stroke-dasharray="2.4 1.4"/>
</g>
<clipPath id="gc13"><rect x="1430" y="56" width="51" height="18" rx="3.5"/></clipPath>
<g clip-path="url(#gc13)">
<rect x="1429" y="55" width="18" height="20" fill="#545454"/>
<rect x="1447" y="55" width="17" height="20" fill="#545454"/>
<rect x="1464" y="55" width="18" height="20" fill="#545454"/>
<rect x="1446.5" y="55" width="1" height="20" fill="#3e3e3e"/>
<rect x="1463.5" y="55" width="1" height="20" fill="#3e3e3e"/>
</g>
<text x="1434.3" y="69.3" fill="#e6e6e6" font-size="11.2" textLength="8.0" lengthAdjust="spacingAndGlyphs">X</text>
<text x="1451.2" y="69.3" fill="#e6e6e6" font-size="11.2" textLength="8.0" lengthAdjust="spacingAndGlyphs">Y</text>
<text x="1468.5" y="69.3" fill="#e6e6e6" font-size="11.2" textLength="7.3" lengthAdjust="spacingAndGlyphs">Z</text>
<rect x="1488" y="56" width="18" height="18" fill="#545454" rx="3.5"/>
<g fill="none" stroke="#e6e6e6" stroke-width="1.1">
<path d="M1493.4 67.6C1493.4 63.6 1495.6 61.6 1499.6 61.4M1500.6 63.6C1500.6 67 1498.6 69 1494.8 69.2" stroke-dasharray="2.6 1.6"/>
<rect x="1491.2" y="67.8" width="3.2" height="3.2"/><rect x="1499.8" y="58.6" width="3.2" height="3.2"/>
</g>
<rect x="1513.5" y="55.5" width="64" height="19" fill="#282828" rx="4" stroke="#464646" stroke-width="1"/>
<text x="1520.3" y="69.3" fill="#e6e6e6" font-size="11.2" textLength="41.0" lengthAdjust="spacingAndGlyphs">Options</text>
<path d="M1568.5 64.5L1571.5 67.8L1574.5 64.5" fill="none" stroke="#e6e6e6" stroke-width="1.3" stroke-linecap="round" stroke-linejoin="round"/>
<text x="676.2" y="98.6" fill="#000000" font-size="11.2" textLength="87.7" lengthAdjust="spacingAndGlyphs" stroke="#000" stroke-width="1.6" stroke-opacity="0.55" stroke-linejoin="round">User Perspective</text>
<text x="675.5" y="97.7" fill="#ffffff" font-size="11.2" textLength="87.7" lengthAdjust="spacingAndGlyphs">User Perspective</text>
<text x="676.2" y="117.3" fill="#000000" font-size="11.2" textLength="61.2" lengthAdjust="spacingAndGlyphs" stroke="#000" stroke-width="1.6" stroke-opacity="0.55" stroke-linejoin="round">(1) Cylinder</text>
<text x="675.5" y="116.4" fill="#ffffff" font-size="11.2" textLength="61.2" lengthAdjust="spacingAndGlyphs">(1) Cylinder</text>
<rect x="660" y="92.6" width="12.8" height="14.4" rx="4" fill="#2e2e2e" fill-opacity="0.9"/>
<path d="M667.1 96.1L670.5 99.5L667.1 102.9" fill="none" stroke="#b0b0b0" stroke-width="1.2" stroke-linecap="round" stroke-linejoin="round"/>
<rect x="1577.4" y="93" width="14" height="13.4" rx="4" fill="#2e2e2e" fill-opacity="0.9"/>
<path d="M1583 96.2L1579.6 99.6L1583 103" fill="none" stroke="#b0b0b0" stroke-width="1.2" stroke-linecap="round" stroke-linejoin="round"/>
<circle cx="1506.5" cy="135.9" r="7.5" fill="#6a3a44" stroke="#f03c58" stroke-width="1.2"/>
<circle cx="1535.1" cy="154.8" r="7.2" fill="#3c4a5e" stroke="#3a82d6" stroke-width="1.2"/>
<path d="M1534.9 128.6L1520.5 112.3" fill="none" stroke="#6a9a1f" stroke-width="2.2"/>
<path d="M1534.9 128.6L1563.8 120.1" fill="none" stroke="#c4364e" stroke-width="2.2"/>
<path d="M1534.9 128.6L1535.1 101.1" fill="none" stroke="#2f8def" stroke-width="2.2"/>
<circle cx="1520.5" cy="112.3" r="7.7" fill="#6a991f"/>
<circle cx="1563.8" cy="120.1" r="7.9" fill="#c3364d"/>
<circle cx="1535.1" cy="101.1" r="8.2" fill="#2f8df0"/>
<circle cx="1549.5" cy="143.5" r="8" fill="#566b2c" stroke="#8fd418" stroke-width="1.3"/>
<text x="1563.8" y="124.2" fill="#3a0a14" font-size="11.5" text-anchor="middle">X</text>
<text x="1520.5" y="116.4" fill="#1c2a06" font-size="11.5" text-anchor="middle">Y</text>
<text x="1535.1" y="105.2" fill="#0a2548" font-size="11.5" text-anchor="middle">Z</text>
<circle cx="1563" cy="182.5" r="13.5" fill="#1c1c1c" fill-opacity="0.52"/>
<circle cx="1563" cy="212.3" r="13.5" fill="#1c1c1c" fill-opacity="0.52"/>
<circle cx="1563" cy="242.9" r="13.5" fill="#1c1c1c" fill-opacity="0.52"/>
<circle cx="1563" cy="272.3" r="13.5" fill="#1c1c1c" fill-opacity="0.52"/>
<g transform="translate(1563,182.5)">
<circle cx="1.75" cy="-1.2" r="6.7" fill="#dcdcdc"/>
<path d="M-3.4 3.8L-7 7.2" stroke="#dcdcdc" stroke-width="2.3" stroke-linecap="round"/>
<path d="M-1.6 -1.2H5.1M1.75 -4.5V2.1" stroke="#262626" stroke-width="1.2"/>
</g>
<g transform="translate(1563,212.6)" fill="#e0e0e0" stroke="#e0e0e0" stroke-linecap="round">
<path d="M-3.4 8.2C-5.4 6.6 -6.4 4.2 -8.2 2.2C-8.8 1.2 -7.4 0.4 -6.4 1.2L-4 3.4V0.6L5 0.2L6.6 -2C7 2.8 6.6 5.8 3.6 8.2C1.6 9.2 -1.4 9.2 -3.4 8.2Z" stroke-width="0.6"/>
<path d="M-3 1.6L-3.8 -5" stroke-width="1.9"/><path d="M-0.6 1L-0.6 -6.6" stroke-width="1.9"/><path d="M2 1.2L2.8 -6" stroke-width="1.9"/><path d="M4.6 2L6.2 -3.6" stroke-width="1.8"/>
</g>
<g transform="translate(1563,242.9)" fill="none" stroke="#dcdcdc" stroke-width="1.2" stroke-linejoin="round">
<path d="M-4.4 -7.8C-6.4 -7.8 -7.6 -6.4 -7.6 -4.7C-7.6 -3 -6.4 -1.7 -4.4 -1.7H4.2C6.2 -1.7 7.6 -3.2 7.6 -5C7.6 -7 6 -8.4 4 -8.2C2.6 -8 1.8 -7.2 0.6 -7.6C-0.8 -8 -2.4 -7.8 -4.4 -7.8Z"/>
<path d="M-5.6 -4.7H-2.8M-4.2 -6.1V-3.3" stroke-width="1"/><circle cx="3.6" cy="-5" r="1.2" stroke-width="1"/>
<rect x="-3.6" y="0.4" width="7" height="5.6" rx="0.8"/>
<path d="M5 3.2L7.8 1.2V5.4Z" stroke-width="1"/><path d="M-6 1.6H-4.2V3.4" stroke-width="1"/>
</g>
<g transform="translate(1563,272.3)" fill="none" stroke="#dcdcdc" stroke-width="1.2" stroke-linejoin="round">
<path d="M-4.4 -6.2H4.4L8 6H-8Z"/><path d="M-1.5 -6.2L-2.7 6M1.5 -6.2L2.7 6M-5.6 -2.1H5.6M-6.8 2.1H6.8" stroke-width="1.1"/>
</g>
</g>
<rect x="666.5" y="27.5" width="918" height="958" fill="none" rx="5" stroke="#474747" stroke-width="1"/>
<rect x="1588.5" y="27.5" width="330" height="306" fill="#282828" rx="5" stroke="#434343" stroke-width="1"/>
<g clip-path="url(#cout)">
<rect x="1589" y="28" width="330" height="25.5" fill="#282828"/>
<rect x="1589" y="53.5" width="330" height="20" fill="#282828"/>
<rect x="1589" y="73.5" width="330" height="20" fill="#2b2b2b"/>
<rect x="1589" y="93.5" width="330" height="20" fill="#334d80"/>
<rect x="1589" y="113.5" width="330" height="20" fill="#2b2b2b"/>
<rect x="1589" y="133.5" width="330" height="20" fill="#282828"/>
<rect x="1589" y="153.5" width="330" height="20" fill="#2b2b2b"/>
<rect x="1589" y="173.5" width="330" height="20" fill="#282828"/>
<rect x="1589" y="193.5" width="330" height="20" fill="#2b2b2b"/>
<rect x="1589" y="213.5" width="330" height="20" fill="#282828"/>
<rect x="1589" y="233.5" width="330" height="20" fill="#2b2b2b"/>
<rect x="1589" y="253.5" width="330" height="20" fill="#282828"/>
<rect x="1589" y="273.5" width="330" height="20" fill="#2b2b2b"/>
<rect x="1589" y="293.5" width="330" height="20" fill="#282828"/>
<rect x="1589" y="313.5" width="330" height="20" fill="#2b2b2b"/>
<rect x="1589" y="92.9" width="330" height="20.2" fill="#334d80"/>
<rect x="1596.9" y="29.5" width="30.6" height="19" fill="#282828" rx="4" stroke="#3d3d3d" stroke-width="1"/>
<rect x="1601.2" y="32.2" width="4.8" height="2.4" fill="#e6e6e6" rx="0.5"/>
<path d="M1603.6 34.6V44.4H1607.8M1603.6 39.6H1607.8" fill="none" stroke="#c0c0c0" stroke-width="1"/>
<rect x="1608.3" y="38.2" width="6.8" height="2.9" fill="#e6e6e6" rx="0.5"/>
<rect x="1608.3" y="43" width="6.8" height="2.9" fill="#e6e6e6" rx="0.5"/>
<path d="M1618 38L1621 41.3L1624 38" fill="none" stroke="#e6e6e6" stroke-width="1.3" stroke-linecap="round" stroke-linejoin="round"/>
<rect x="1633.8" y="29.5" width="30.5" height="19" fill="#282828" rx="4" stroke="#3d3d3d" stroke-width="1"/>
<g transform="translate(1638,32)" fill="none" stroke="#e6e6e6" stroke-width="1.1">
<path d="M0.6 4.6V13.6H9.8" stroke-opacity="0.8"/><path d="M2.6 2.8V11.6H11.8" stroke-opacity="0.9"/>
<rect x="4.7" y="0.6" width="9.2" height="9.2" rx="0.8" fill="#282828" stroke-width="1.2"/>
<path d="M5.6 9.2L8.6 3.2L10.2 6.2L11 5.2L13 9.2Z" fill="#e6e6e6" stroke="none"/>
<rect x="11" y="1.8" width="1.8" height="1.8" fill="#e6e6e6" stroke="none"/>
</g>
<path d="M1655 38L1658 41.3L1661 38" fill="none" stroke="#e6e6e6" stroke-width="1.3" stroke-linecap="round" stroke-linejoin="round"/>
<rect x="1683.9" y="29.5" width="117.6" height="19" fill="#1d1d1d" rx="4" stroke="#3d3d3d" stroke-width="1"/>
<circle cx="1696.1" cy="36.9" r="4.6" fill="none" stroke="#e6e6e6" stroke-width="1.2"/>
<path d="M1692.9 40.3L1688.3 45.1" fill="none" stroke="#e6e6e6" stroke-width="1.3" stroke-linecap="round"/>
<text x="1709.2" y="43.3" fill="#7a7a7a" font-size="11.2" textLength="34.5" lengthAdjust="spacingAndGlyphs">Search</text>
<rect x="1855.8" y="29.5" width="30.5" height="19" fill="#282828" rx="4" stroke="#3d3d3d" stroke-width="1"/>
<path d="M1858.6 33H1871.4L1866.6 38.8V45.4L1863.4 43.4V38.8Z" fill="none" stroke="#e6e6e6" stroke-width="1.2" stroke-linejoin="round"/>
<path d="M1876.8 38L1879.8 41.3L1882.8 38" fill="none" stroke="#e6e6e6" stroke-width="1.3" stroke-linecap="round" stroke-linejoin="round"/>
<rect x="1892.8" y="30" width="18.2" height="18" fill="#545454" rx="3.5"/>
<g transform="translate(1895.4,34.6)" fill="none" stroke="#c8c8c8" stroke-width="1.1">
<path d="M0.6 0.6H8M0.6 3.4V10.6H11.4V7.6M4.4 6H7.6"/>
<circle cx="11" cy="1.4" r="3.4" fill="#e6e6e6" stroke="none"/><path d="M9 1.4H13M11 -0.6V3.4" stroke="#545454" stroke-width="1.1"/>
</g>
<g transform="translate(1611,56) scale(1)">
<rect x="0" y="0" width="14" height="3.6" fill="#e6e6e6"/>
<path d="M1 4.8H13V13H1Z" fill="#e6e6e6"/>
<rect x="5" y="6.4" width="4" height="1.8" rx="0.6" fill="#282828"/>
</g>
<text x="1632.4" y="67.9" fill="#e6e6e6" font-size="11.2" textLength="87.8" lengthAdjust="spacingAndGlyphs">Scene Collection</text>
<path d="M1614.1 81.2L1618.3 85.7L1622.5 81.2" fill="none" stroke="#c8c8c8" stroke-width="1.2" stroke-linecap="round" stroke-linejoin="round"/>
<rect x="1628.5" y="74.5" width="19" height="17.6" fill="#424242" rx="4" stroke="#858585" stroke-width="1"/>
<g transform="translate(1631,77) scale(1)">
<rect x="0" y="0" width="14" height="3.6" fill="#e6e6e6"/>
<path d="M1 4.8H13V13H1Z" fill="#e6e6e6"/>
<rect x="5" y="6.4" width="4" height="1.8" rx="0.6" fill="#424242"/>
</g>
<text x="1652.5" y="87.7" fill="#e6e6e6" font-size="11.2" textLength="52.8" lengthAdjust="spacingAndGlyphs">Collection</text>
<g fill="none" stroke="#e6e6e6" stroke-width="1">
<path d="M1593.5 98.5H1598M1592.4 100V107M1594 109H1601M1602.6 107.4V103.4"/>
<rect x="1591" y="97" width="2.8" height="2.8" rx="0.6"/><rect x="1591" y="107.6" width="2.8" height="2.8" rx="0.6"/><rect x="1601.2" y="107.6" width="2.8" height="2.8" rx="0.6"/>
<rect x="1599.6" y="95.6" width="4.8" height="4.8" fill="#fff" stroke="none"/>
</g>
<path d="M1617.5 98V108.4" fill="none" stroke="#8a7450" stroke-width="1"/>
<path d="M1636.3 98.9L1640.9 103.5L1636.3 108.1" fill="none" stroke="#d8d8d8" stroke-width="1.2" stroke-linecap="round" stroke-linejoin="round"/>
<rect x="1648.5" y="94.5" width="19" height="17.6" fill="#55679a" rx="4" stroke="#7f8db5" stroke-width="1"/>
<path d="M1652.2 97.6H1664.4Q1665.6 97.8 1665 99L1659.2 109.4Q1658.3 110.4 1657.4 109.4L1651.6 99Q1651 97.8 1652.2 97.6Z M1655.8 100.8L1658.3 105.4L1660.8 100.8Z" fill="#e8964a" fill-rule="evenodd"/>
<text x="1672.5" y="107.8" fill="#f5a523" font-size="11.2" textLength="43.2" lengthAdjust="spacingAndGlyphs">Cylinder</text>
<rect x="1736.5" y="94.5" width="19" height="17.6" fill="#2d5a78" rx="4" stroke="#3f8e95" stroke-width="1"/>
<g fill="none" stroke="#1fd4b0" stroke-width="1.2">
<path d="M1741.4 99H1750.6M1740.8 100.4L1745.2 106.8M1751.2 100.4L1746.8 106.8"/>
<rect x="1739.4" y="97.4" width="3" height="3" rx="0.7"/><rect x="1749.6" y="97.4" width="3" height="3" rx="0.7"/><rect x="1744.5" y="106.6" width="3" height="3" rx="0.7"/>
</g>
<g transform="translate(1631,117) scale(1)">
<rect x="0" y="0" width="14" height="3.6" fill="#e6e6e6"/>
<path d="M1 4.8H13V13H1Z" fill="#e6e6e6"/>
<rect x="5" y="6.4" width="4" height="1.8" rx="0.6" fill="#2b2b2b"/>
</g>
<text x="1652.7" y="127.8" fill="#e6e6e6" font-size="11.2" textLength="33.9" lengthAdjust="spacingAndGlyphs">Export</text>
<rect x="1854.8" y="78" width="10.2" height="10.2" fill="#e6e6e6" rx="1.4"/>
<path d="M1856.6 83.2L1859 85.8L1863.4 80.6" fill="none" stroke="#2b2b2b" stroke-width="1.7"/>
<path d="M1873.7 82.8C1876.9 76.6 1883.7 76.6 1886.9 82.8C1883.7 89 1876.9 89 1873.7 82.8Z" fill="#e6e6e6"/>
<circle cx="1880.3" cy="82.8" r="3.2" fill="#2b2b2b"/><circle cx="1880.3" cy="82.8" r="1.5" fill="#e6e6e6"/>
<path d="M1893.9 79.4H1897.1L1898.5 77H1902.7L1904.1 79.4H1907.3V88.4H1893.9Z" fill="#e6e6e6"/>
<circle cx="1900.6" cy="83.4" r="3.7" fill="none" stroke="#2b2b2b" stroke-width="1.1"/><circle cx="1900.6" cy="83.4" r="1.9" fill="#2b2b2b"/>
<path d="M1873.7 102.6C1876.9 96.4 1883.7 96.4 1886.9 102.6C1883.7 108.8 1876.9 108.8 1873.7 102.6Z" fill="#e6e6e6"/>
<circle cx="1880.3" cy="102.6" r="3.2" fill="#334d80"/><circle cx="1880.3" cy="102.6" r="1.5" fill="#e6e6e6"/>
<path d="M1893.9 99.2H1897.1L1898.5 96.8H1902.7L1904.1 99.2H1907.3V108.2H1893.9Z" fill="#e6e6e6"/>
<circle cx="1900.6" cy="103.2" r="3.7" fill="none" stroke="#334d80" stroke-width="1.1"/><circle cx="1900.6" cy="103.2" r="1.9" fill="#334d80"/>
<rect x="1854.8" y="118" width="10.2" height="10.2" fill="#e6e6e6" rx="1.4"/>
<path d="M1856.6 123.2L1859 125.8L1863.4 120.6" fill="none" stroke="#2b2b2b" stroke-width="1.7"/>
<path d="M1873.7 122.8C1876.9 116.6 1883.7 116.6 1886.9 122.8C1883.7 129 1876.9 129 1873.7 122.8Z" fill="#e6e6e6"/>
<circle cx="1880.3" cy="122.8" r="3.2" fill="#2b2b2b"/><circle cx="1880.3" cy="122.8" r="1.5" fill="#e6e6e6"/>
<path d="M1893.9 119.4H1897.1L1898.5 117H1902.7L1904.1 119.4H1907.3V128.4H1893.9Z" fill="#e6e6e6"/>
<circle cx="1900.6" cy="123.4" r="3.7" fill="none" stroke="#2b2b2b" stroke-width="1.1"/><circle cx="1900.6" cy="123.4" r="1.9" fill="#2b2b2b"/>
</g>
<rect x="1588.5" y="27.5" width="330" height="306" fill="none" rx="5" stroke="#434343" stroke-width="1"/>
<rect x="1588.5" y="337.5" width="330" height="648" fill="#303030" rx="5" stroke="#434343" stroke-width="1"/>
<g clip-path="url(#cpr)">
<rect x="1589" y="362" width="27" height="624" fill="#1c1c1c"/>
<rect x="1597.3" y="339.5" width="29.7" height="19" fill="#282828" rx="4" stroke="#3d3d3d" stroke-width="1"/>
<g fill="none" stroke="#e6e6e6" stroke-width="1.1">
<rect x="1601.2" y="342.2" width="14" height="5.6" rx="2.8" fill="#e6e6e6"/><rect x="1601.2" y="350" width="14" height="5.6" rx="2.8" fill="#e6e6e6"/>
<rect x="1607.4" y="343.6" width="6.4" height="2.8" rx="1.4" fill="#282828" stroke="none"/><rect x="1603" y="351.4" width="6.4" height="2.8" rx="1.4" fill="#282828" stroke="none"/>
</g>
<path d="M1618 348L1621 351.3L1624 348" fill="none" stroke="#e6e6e6" stroke-width="1.3" stroke-linecap="round" stroke-linejoin="round"/>
<rect x="1696.2" y="339.5" width="116.9" height="19" fill="#1d1d1d" rx="4" stroke="#3d3d3d" stroke-width="1"/>
<circle cx="1708.2" cy="347.2" r="4.6" fill="none" stroke="#e6e6e6" stroke-width="1.2"/>
<path d="M1705 350.6L1700.4 355.4" fill="none" stroke="#e6e6e6" stroke-width="1.3" stroke-linecap="round"/>
<text x="1721.5" y="352.6" fill="#7a7a7a" font-size="11.2" textLength="34.5" lengthAdjust="spacingAndGlyphs">Search</text>
<rect x="1893.2" y="339.5" width="17.9" height="19" fill="#282828" rx="4" stroke="#3d3d3d" stroke-width="1"/>
<path d="M1899.2 348.3L1902.2 351.6L1905.2 348.3" fill="none" stroke="#e6e6e6" stroke-width="1.3" stroke-linecap="round" stroke-linejoin="round"/>
<path d="M1616 491H1594a4 4 0 0 0 -4 4V513a4 4 0 0 0 4 4H1616Z" fill="#303030"/>
<g transform="translate(1626.8,372.8)">
<path d="M0.3 9.6 L4.2 0.6 Q5 -0.2 5.6 0.8 L7.6 6 Q5.2 7.2 5.6 10.4 Q2.5 11 0.3 9.6Z" fill="#e6e6e6"/>
<circle cx="11.4" cy="2.6" r="1.9" fill="#e6e6e6"/>
<circle cx="9.6" cy="10.2" r="3.3" fill="#303030" stroke="#e6e6e6" stroke-width="1.2"/>
<path d="M8 9.6A2 2 0 0 1 9.8 8.3" stroke="#e6e6e6" stroke-width="0.9" fill="none"/>
</g>
<text x="1650.4" y="384" fill="#e6e6e6" font-size="11.2" textLength="31.6" lengthAdjust="spacingAndGlyphs">Scene</text>
<g transform="translate(1895.8,373)" fill="none" stroke="#b0b0b0" stroke-width="1.1" stroke-linejoin="round" stroke-linecap="round">
<path d="M8.6 0.8L13.2 5.4L11.4 5.8L8.8 8.4L8.6 11.6L2.4 5.4L5.6 5.2L8.2 2.6Z"/>
<path d="M5.4 8.6L0.6 13.4"/>
</g>
<rect x="1624" y="400.3" width="288" height="110.9" fill="#3d3d3d" rx="4"/>
<path d="M1633.3 410.5L1637.5 415L1641.7 410.5" fill="none" stroke="#c8c8c8" stroke-width="1.2" stroke-linecap="round" stroke-linejoin="round"/>
<text x="1646.5" y="416.8" fill="#e6e6e6" font-size="11.2" textLength="31.5" lengthAdjust="spacingAndGlyphs">Scene</text>
<rect x="1894.6" y="410.4" width="1.4" height="1.4" fill="#6e6e6e"/>
<rect x="1897.6" y="410.4" width="1.4" height="1.4" fill="#6e6e6e"/>
<rect x="1900.6" y="410.4" width="1.4" height="1.4" fill="#6e6e6e"/>
<rect x="1903.6" y="410.4" width="1.4" height="1.4" fill="#6e6e6e"/>
<rect x="1894.6" y="413.6" width="1.4" height="1.4" fill="#6e6e6e"/>
<rect x="1897.6" y="413.6" width="1.4" height="1.4" fill="#6e6e6e"/>
<rect x="1900.6" y="413.6" width="1.4" height="1.4" fill="#6e6e6e"/>
<rect x="1903.6" y="413.6" width="1.4" height="1.4" fill="#6e6e6e"/>
<rect x="1624" y="513.5" width="288" height="24.3" fill="#3d3d3d" rx="4"/>
<path d="M1635.4 520.7L1639.8 525.1L1635.4 529.5" fill="none" stroke="#c8c8c8" stroke-width="1.2" stroke-linecap="round" stroke-linejoin="round"/>
<rect x="1894.6" y="523.1" width="1.4" height="1.4" fill="#6e6e6e"/>
<rect x="1897.6" y="523.1" width="1.4" height="1.4" fill="#6e6e6e"/>
<rect x="1900.6" y="523.1" width="1.4" height="1.4" fill="#6e6e6e"/>
<rect x="1903.6" y="523.1" width="1.4" height="1.4" fill="#6e6e6e"/>
<rect x="1894.6" y="526.3" width="1.4" height="1.4" fill="#6e6e6e"/>
<rect x="1897.6" y="526.3" width="1.4" height="1.4" fill="#6e6e6e"/>
<rect x="1900.6" y="526.3" width="1.4" height="1.4" fill="#6e6e6e"/>
<rect x="1903.6" y="526.3" width="1.4" height="1.4" fill="#6e6e6e"/>
<text x="1646" y="529.9" fill="#e6e6e6" font-size="11.2" textLength="27.2" lengthAdjust="spacingAndGlyphs">Units</text>
<rect x="1624" y="540.5" width="288" height="24.3" fill="#3d3d3d" rx="4"/>
<path d="M1635.4 547.7L1639.8 552.1L1635.4 556.5" fill="none" stroke="#c8c8c8" stroke-width="1.2" stroke-linecap="round" stroke-linejoin="round"/>
<rect x="1894.6" y="550.1" width="1.4" height="1.4" fill="#6e6e6e"/>
<rect x="1897.6" y="550.1" width="1.4" height="1.4" fill="#6e6e6e"/>
<rect x="1900.6" y="550.1" width="1.4" height="1.4" fill="#6e6e6e"/>
<rect x="1903.6" y="550.1" width="1.4" height="1.4" fill="#6e6e6e"/>
<rect x="1894.6" y="553.3" width="1.4" height="1.4" fill="#6e6e6e"/>
<rect x="1897.6" y="553.3" width="1.4" height="1.4" fill="#6e6e6e"/>
<rect x="1900.6" y="553.3" width="1.4" height="1.4" fill="#6e6e6e"/>
<rect x="1903.6" y="553.3" width="1.4" height="1.4" fill="#6e6e6e"/>
<rect x="1645.2" y="546.7" width="11.6" height="11.6" fill="#4772b3" rx="2.2"/>
<path d="M1647.6 552.7L1650.2 555.3L1654.6 549.5" fill="none" stroke="#ffffff" stroke-width="1.6"/>
<text x="1660.2" y="556.9" fill="#e6e6e6" font-size="11.2" textLength="37.8" lengthAdjust="spacingAndGlyphs">Gravity</text>
<rect x="1624" y="567.5" width="288" height="24.3" fill="#3d3d3d" rx="4"/>
<path d="M1635.4 574.7L1639.8 579.1L1635.4 583.5" fill="none" stroke="#c8c8c8" stroke-width="1.2" stroke-linecap="round" stroke-linejoin="round"/>
<rect x="1894.6" y="577.1" width="1.4" height="1.4" fill="#6e6e6e"/>
<rect x="1897.6" y="577.1" width="1.4" height="1.4" fill="#6e6e6e"/>
<rect x="1900.6" y="577.1" width="1.4" height="1.4" fill="#6e6e6e"/>
<rect x="1903.6" y="577.1" width="1.4" height="1.4" fill="#6e6e6e"/>
<rect x="1894.6" y="580.3" width="1.4" height="1.4" fill="#6e6e6e"/>
<rect x="1897.6" y="580.3" width="1.4" height="1.4" fill="#6e6e6e"/>
<rect x="1900.6" y="580.3" width="1.4" height="1.4" fill="#6e6e6e"/>
<rect x="1903.6" y="580.3" width="1.4" height="1.4" fill="#6e6e6e"/>
<text x="1646" y="583.9" fill="#e6e6e6" font-size="11.2" textLength="55.8" lengthAdjust="spacingAndGlyphs">Simulation</text>
<rect x="1624" y="594.5" width="288" height="24.3" fill="#3d3d3d" rx="4"/>
<path d="M1635.4 601.7L1639.8 606.1L1635.4 610.5" fill="none" stroke="#c8c8c8" stroke-width="1.2" stroke-linecap="round" stroke-linejoin="round"/>
<rect x="1894.6" y="604.1" width="1.4" height="1.4" fill="#6e6e6e"/>
<rect x="1897.6" y="604.1" width="1.4" height="1.4" fill="#6e6e6e"/>
<rect x="1900.6" y="604.1" width="1.4" height="1.4" fill="#6e6e6e"/>
<rect x="1903.6" y="604.1" width="1.4" height="1.4" fill="#6e6e6e"/>
<rect x="1894.6" y="607.3" width="1.4" height="1.4" fill="#6e6e6e"/>
<rect x="1897.6" y="607.3" width="1.4" height="1.4" fill="#6e6e6e"/>
<rect x="1900.6" y="607.3" width="1.4" height="1.4" fill="#6e6e6e"/>
<rect x="1903.6" y="607.3" width="1.4" height="1.4" fill="#6e6e6e"/>
<text x="1646" y="610.9" fill="#e6e6e6" font-size="11.2" textLength="63.8" lengthAdjust="spacingAndGlyphs">Keying Sets</text>
<rect x="1624" y="621.5" width="288" height="24.3" fill="#3d3d3d" rx="4"/>
<path d="M1635.4 628.7L1639.8 633.1L1635.4 637.5" fill="none" stroke="#c8c8c8" stroke-width="1.2" stroke-linecap="round" stroke-linejoin="round"/>
<rect x="1894.6" y="631.1" width="1.4" height="1.4" fill="#6e6e6e"/>
<rect x="1897.6" y="631.1" width="1.4" height="1.4" fill="#6e6e6e"/>
<rect x="1900.6" y="631.1" width="1.4" height="1.4" fill="#6e6e6e"/>
<rect x="1903.6" y="631.1" width="1.4" height="1.4" fill="#6e6e6e"/>
<rect x="1894.6" y="634.3" width="1.4" height="1.4" fill="#6e6e6e"/>
<rect x="1897.6" y="634.3" width="1.4" height="1.4" fill="#6e6e6e"/>
<rect x="1900.6" y="634.3" width="1.4" height="1.4" fill="#6e6e6e"/>
<rect x="1903.6" y="634.3" width="1.4" height="1.4" fill="#6e6e6e"/>
<text x="1646" y="637.9" fill="#e6e6e6" font-size="11.2" textLength="30.6" lengthAdjust="spacingAndGlyphs">Audio</text>
<rect x="1624" y="648.5" width="288" height="24.3" fill="#3d3d3d" rx="4"/>
<path d="M1635.4 655.7L1639.8 660.1L1635.4 664.5" fill="none" stroke="#c8c8c8" stroke-width="1.2" stroke-linecap="round" stroke-linejoin="round"/>
<rect x="1894.6" y="658.1" width="1.4" height="1.4" fill="#6e6e6e"/>
<rect x="1897.6" y="658.1" width="1.4" height="1.4" fill="#6e6e6e"/>
<rect x="1900.6" y="658.1" width="1.4" height="1.4" fill="#6e6e6e"/>
<rect x="1903.6" y="658.1" width="1.4" height="1.4" fill="#6e6e6e"/>
<rect x="1894.6" y="661.3" width="1.4" height="1.4" fill="#6e6e6e"/>
<rect x="1897.6" y="661.3" width="1.4" height="1.4" fill="#6e6e6e"/>
<rect x="1900.6" y="661.3" width="1.4" height="1.4" fill="#6e6e6e"/>
<rect x="1903.6" y="661.3" width="1.4" height="1.4" fill="#6e6e6e"/>
<text x="1646" y="664.9" fill="#e6e6e6" font-size="11.2" textLength="92.1" lengthAdjust="spacingAndGlyphs">Rigid Body World</text>
<rect x="1624" y="675.5" width="288" height="24.3" fill="#3d3d3d" rx="4"/>
<path d="M1635.4 682.7L1639.8 687.1L1635.4 691.5" fill="none" stroke="#c8c8c8" stroke-width="1.2" stroke-linecap="round" stroke-linejoin="round"/>
<rect x="1894.6" y="685.1" width="1.4" height="1.4" fill="#6e6e6e"/>
<rect x="1897.6" y="685.1" width="1.4" height="1.4" fill="#6e6e6e"/>
<rect x="1900.6" y="685.1" width="1.4" height="1.4" fill="#6e6e6e"/>
<rect x="1903.6" y="685.1" width="1.4" height="1.4" fill="#6e6e6e"/>
<rect x="1894.6" y="688.3" width="1.4" height="1.4" fill="#6e6e6e"/>
<rect x="1897.6" y="688.3" width="1.4" height="1.4" fill="#6e6e6e"/>
<rect x="1900.6" y="688.3" width="1.4" height="1.4" fill="#6e6e6e"/>
<rect x="1903.6" y="688.3" width="1.4" height="1.4" fill="#6e6e6e"/>
<text x="1646" y="691.9" fill="#e6e6e6" font-size="11.2" textLength="67.1" lengthAdjust="spacingAndGlyphs">Light Probes</text>
<rect x="1624" y="702.5" width="288" height="24.3" fill="#3d3d3d" rx="4"/>
<path d="M1635.4 709.7L1639.8 714.1L1635.4 718.5" fill="none" stroke="#c8c8c8" stroke-width="1.2" stroke-linecap="round" stroke-linejoin="round"/>
<rect x="1894.6" y="712.1" width="1.4" height="1.4" fill="#6e6e6e"/>
<rect x="1897.6" y="712.1" width="1.4" height="1.4" fill="#6e6e6e"/>
<rect x="1900.6" y="712.1" width="1.4" height="1.4" fill="#6e6e6e"/>
<rect x="1903.6" y="712.1" width="1.4" height="1.4" fill="#6e6e6e"/>
<rect x="1894.6" y="715.3" width="1.4" height="1.4" fill="#6e6e6e"/>
<rect x="1897.6" y="715.3" width="1.4" height="1.4" fill="#6e6e6e"/>
<rect x="1900.6" y="715.3" width="1.4" height="1.4" fill="#6e6e6e"/>
<rect x="1903.6" y="715.3" width="1.4" height="1.4" fill="#6e6e6e"/>
<text x="1646" y="718.9" fill="#e6e6e6" font-size="11.2" textLength="53.1" lengthAdjust="spacingAndGlyphs">Animation</text>
<rect x="1624" y="729.5" width="288" height="24.3" fill="#3d3d3d" rx="4"/>
<path d="M1635.4 736.7L1639.8 741.1L1635.4 745.5" fill="none" stroke="#c8c8c8" stroke-width="1.2" stroke-linecap="round" stroke-linejoin="round"/>
<rect x="1894.6" y="739.1" width="1.4" height="1.4" fill="#6e6e6e"/>
<rect x="1897.6" y="739.1" width="1.4" height="1.4" fill="#6e6e6e"/>
<rect x="1900.6" y="739.1" width="1.4" height="1.4" fill="#6e6e6e"/>
<rect x="1903.6" y="739.1" width="1.4" height="1.4" fill="#6e6e6e"/>
<rect x="1894.6" y="742.3" width="1.4" height="1.4" fill="#6e6e6e"/>
<rect x="1897.6" y="742.3" width="1.4" height="1.4" fill="#6e6e6e"/>
<rect x="1900.6" y="742.3" width="1.4" height="1.4" fill="#6e6e6e"/>
<rect x="1903.6" y="742.3" width="1.4" height="1.4" fill="#6e6e6e"/>
<text x="1646" y="745.9" fill="#e6e6e6" font-size="11.2" textLength="98.9" lengthAdjust="spacingAndGlyphs">Custom Properties</text>
<rect x="1746.4" y="434.8" width="156.4" height="18" fill="#353535" rx="4"/>
<rect x="1746" y="434" width="157" height="17.8" fill="#1d1d1d" rx="4"/>
<text x="1736.1" y="447.1" fill="#e6e6e6" font-size="11.2" text-anchor="end" textLength="42.5" lengthAdjust="spacingAndGlyphs">Camera</text>
<text x="1771.4" y="446.9" fill="#7e7e7e" font-size="11.2" textLength="33.1" lengthAdjust="spacingAndGlyphs">Object</text>
<rect x="1746.4" y="460" width="156.4" height="18" fill="#353535" rx="4"/>
<rect x="1746" y="459.2" width="157" height="17.8" fill="#1d1d1d" rx="4"/>
<text x="1736.1" y="472.3" fill="#e6e6e6" font-size="11.2" text-anchor="end" textLength="101.0" lengthAdjust="spacingAndGlyphs">Background Scene</text>
<text x="1771.4" y="472.1" fill="#7e7e7e" font-size="11.2" textLength="31.7" lengthAdjust="spacingAndGlyphs">Scene</text>
<rect x="1746.4" y="485" width="156.4" height="18" fill="#353535" rx="4"/>
<rect x="1746" y="484.2" width="157" height="17.8" fill="#1d1d1d" rx="4"/>
<text x="1736.1" y="497.3" fill="#e6e6e6" font-size="11.2" text-anchor="end" textLength="56.4" lengthAdjust="spacingAndGlyphs">Active Clip</text>
<text x="1771.4" y="497.1" fill="#7e7e7e" font-size="11.2" textLength="54.8" lengthAdjust="spacingAndGlyphs">Movie Clip</text>
<g fill="none" stroke="#e6e6e6" stroke-width="1.2">
<path d="M1750.6 439.6V436.4H1753.8M1760.6 436.4H1763.8V439.6M1763.8 446.4V449.6H1760.6M1753.8 449.6H1750.6V446.4"/>
<rect x="1753" y="438.8" width="8.4" height="8.4" fill="#e6e6e6" stroke="none"/>
</g>
<g transform="translate(1750.4,461.2)">
<path d="M0.3 9.6 L4.2 0.6 Q5 -0.2 5.6 0.8 L7.6 6 Q5.2 7.2 5.6 10.4 Q2.5 11 0.3 9.6Z" fill="#e6e6e6"/>
<circle cx="11.4" cy="2.6" r="1.9" fill="#e6e6e6"/>
<circle cx="9.6" cy="10.2" r="3.3" fill="#1d1d1d" stroke="#e6e6e6" stroke-width="1.2"/>
<path d="M8 9.6A2 2 0 0 1 9.8 8.3" stroke="#e6e6e6" stroke-width="0.9" fill="none"/>
</g>
<g fill="#e6e6e6">
<rect x="1751.8" y="492.6" width="12" height="7.6"/>
<path d="M1751 489.2L1762.4 486L1763 488.2L1751.6 491.6Z"/>
<path d="M1753.4 488.8L1754.6 491M1756.6 487.8L1757.8 490M1759.8 486.8L1761 489" stroke="#1d1d1d" stroke-width="1.2"/>
</g>
<g transform="translate(1885.4,436.2)" fill="#b4b4b4" stroke="none">
<path d="M0.6 13.4L1.2 10.6L7.6 4.2L9.8 6.4L3.4 12.8Z"/>
<path d="M7 3L8.2 1.8L9.2 2.8L10.6 1.2C11.6 0.2 13.6 2 12.6 3.2L11.2 4.8L12.2 5.8L11 7Z"/>
</g>
<g transform="translate(1602.5,384)">
<path d="M-4.6 -7.4V-1.4" stroke="#c2c2c2" stroke-width="1.2"/>
<path d="M-6.2 -0.6H-3L-2.8 4.6A1.6 1.6 0 0 1 -6.4 4.6Z" fill="#c2c2c2"/>
<path d="M1.6 -7.2A3.2 3.2 0 0 0 2.6 -1.4V5.6A1.5 1.5 0 0 0 5.6 5.6V-1.4A3.2 3.2 0 0 0 6.6 -7.2V-3.6H1.6Z" fill="#c2c2c2"/>
</g>
<g transform="translate(1602.5,419.5)">
<path d="M-6.8 -4.4H-3.8L-3 -6.4H1.4L2.2 -4.4H6.8V6.2H-6.8Z" fill="#c2c2c2"/>
<path d="M-5 -1.4H2.2M-5 0.8H2.2M-5 3H2.2" stroke="#1c1c1c" stroke-width="1"/>
<rect x="3.6" y="-2" width="1.9" height="1.9" fill="#1c1c1c"/><rect x="3.6" y="1.6" width="1.9" height="1.9" fill="#1c1c1c"/>
<rect x="4.6" y="-6.6" width="1.6" height="1" fill="#c2c2c2"/>
</g>
<g transform="translate(1602.5,447.8)">
<path d="M-7 -6.4H7V-1.6H5V-3.4H-5V-1.6H-7Z" fill="#c2c2c2"/>
<rect x="-4.4" y="-2.2" width="8.8" height="8.6" fill="none" stroke="#c2c2c2" stroke-width="1.2"/>
<path d="M-3 5L-0.4 1.2L1.4 3.4L2.2 2.6L3.4 5Z" fill="#c2c2c2"/><circle cx="2.2" cy="0" r="0.9" fill="#c2c2c2"/>
</g>
<g transform="translate(1602.5,476)">
<path d="M-6.6 -3V6.6H3.4M-4.4 -5V4.4H5.4" fill="none" stroke="#c2c2c2" stroke-width="1.1"/>
<rect x="-2.4" y="-6.8" width="9.4" height="9.4" rx="0.8" fill="none" stroke="#c2c2c2" stroke-width="1.1"/>
<path d="M-1.6 1.8L1.4 -2.6L3 -0.4L4 -1.4L6.2 1.8Z" fill="#c2c2c2"/><circle cx="4.6" cy="-4.4" r="0.9" fill="#c2c2c2"/>
</g>
<g transform="translate(1595.6,496.6)">
<path d="M0.3 9.6 L4.2 0.6 Q5 -0.2 5.6 0.8 L7.6 6 Q5.2 7.2 5.6 10.4 Q2.5 11 0.3 9.6Z" fill="#e6e6e6"/>
<circle cx="11.4" cy="2.6" r="1.9" fill="#e6e6e6"/>
<circle cx="9.6" cy="10.2" r="3.3" fill="#303030" stroke="#e6e6e6" stroke-width="1.2"/>
<path d="M8 9.6A2 2 0 0 1 9.8 8.3" stroke="#e6e6e6" stroke-width="0.9" fill="none"/>
</g>
<g transform="translate(1602.5,532.2)">
<circle r="5.5" fill="none" stroke="#d9505f" stroke-width="1.2"/>
<path d="M-4.4 -2.6C-3.2 -4.6 -0.8 -5.2 0.6 -4.4C1.4 -3.4 -0.2 -2.8 -0.6 -1.8C-1 -0.6 1 -0.2 0.8 1.4C0.6 2.8 -0.8 3.2 -1.2 4.6C-3.6 3.8 -5.2 0.4 -4.4 -2.6Z M2.8 -4C4.2 -3.2 5 -1.6 5 0C4 0.2 3 -0.4 2.8 -1.6C2.6 -2.6 3 -3.2 2.8 -4Z" fill="#d9505f"/>
<path d="M-8.4 5.6L-5.6 3.6M5.6 -3.6L8.4 -5.6" fill="none" stroke="#d9505f" stroke-width="1.1"/>
</g>
<g transform="translate(1602.5,567)">
<rect x="-6.4" y="-6" width="12.8" height="3.2" fill="none" stroke="#c2c2c2" stroke-width="1.2"/>
<path d="M-5.4 -2.8V6H5.4V-2.8" fill="none" stroke="#c2c2c2" stroke-width="1.2"/>
<path d="M-2 0.6H2" stroke="#c2c2c2" stroke-width="1.4"/>
</g>
<g transform="translate(1602.5,604)">
<path d="M-6.8 -3.6V-6.8H-3.6M3.6 -6.8H6.8V-3.6M6.8 3.6V6.8H3.6M-3.6 6.8H-6.8V3.6" fill="none" stroke="#cc8a52" stroke-width="1.2"/>
<rect x="-4.2" y="-4.2" width="8.4" height="8.4" fill="#cc8a52"/>
</g>
<g transform="translate(1602.5,632)">
<path d="M-6.6 5L0 -1.6A4.2 4.2 0 0 1 5.2 -6.6L2.6 -4L3 -2.2L4.8 -1.8L7.2 -4.4A4.2 4.2 0 0 1 1.8 0.6L-4.6 7A1.5 1.5 0 0 1 -6.6 5Z" fill="#5a80d4"/>
</g>
<g transform="translate(1602.5,660.4)">
<path d="M-5.2 -4.4V5.6M-5.2 -4.4L5.6 5.4M-5.2 -4.4H4.6" fill="none" stroke="#5a80d4" stroke-width="1.0"/>
<circle cx="-5.2" cy="-4.6" r="2.2" fill="#5a80d4"/><circle cx="5.4" cy="-4.4" r="1.5" fill="#5a80d4"/><circle cx="-5.2" cy="5.6" r="1.5" fill="#5a80d4"/><circle cx="5.4" cy="5.4" r="1.7" fill="#5a80d4"/>
</g>
<g transform="translate(1602.5,688.2)">
<path d="M3.4 -4.6A5.6 5.6 0 1 0 5.4 1.8" fill="none" stroke="#5a80d4" stroke-width="1.3"/>
<circle cx="0" cy="0" r="2.6" fill="#5a80d4"/><circle cx="5.4" cy="-5" r="1.6" fill="#5a80d4"/>
</g>
<g transform="translate(1602.5,716)">
<path d="M-6.4 2.6A4.4 4.4 0 0 0 0 6.2L6 -1.2A3.4 3.4 0 0 0 2.6 -6.6C0 -6.4 -1.6 -5 -3 -3.4C-5.6 -2.6 -6.8 0.2 -6.4 2.6Z" fill="none" stroke="#5a80d4" stroke-width="1.3"/>
<circle cx="-2.2" cy="2" r="2" fill="none" stroke="#5a80d4" stroke-width="1.3"/><circle cx="3" cy="-3.4" r="1.1" fill="#5a80d4"/>
</g>
<g transform="translate(1602.5,743.8)" fill="none" stroke="#1fd4a6" stroke-width="1.3">
<path d="M-4.6 -5H4.6M-5.4 -3.6L-0.9 4.4M5.4 -3.6L0.9 4.4"/>
<rect x="-7" y="-6.6" width="3.2" height="3.2" rx="0.7"/><rect x="3.8" y="-6.6" width="3.2" height="3.2" rx="0.7"/><rect x="-1.6" y="4" width="3.2" height="3.2" rx="0.7"/>
</g>
<g transform="translate(1602.5,772)">
<circle r="6.6" fill="#c0646c"/>
<path d="M0 0L-6.8 0A6.8 6.8 0 0 0 0 6.8Z M0 0L6.8 0A6.8 6.8 0 0 0 0 -6.8Z" fill="#e88a93" fill-opacity="0.0"/>
<path d="M0 0H6.2A6.2 6.2 0 0 0 0 -6.2Z M0 0H-6.2A6.2 6.2 0 0 0 0 6.2Z" fill="#1c1c1c" fill-opacity="0.9"/>
</g>
</g>
<rect x="1588.5" y="337.5" width="330" height="648" fill="none" rx="5" stroke="#434343" stroke-width="1"/>
<rect x="10.2" y="990.2" width="11.2" height="15" rx="3.6" fill="none" stroke="#9a9a9a" stroke-width="1.1"/>
<path d="M10.2 996.8V993.8A3.6 3.6 0 0 1 13.8 990.2H15.4V996.8Z" fill="#9a9a9a"/>
<text x="26.25" y="1001.8" fill="#b4b4b4" font-size="11.2" textLength="31.4" lengthAdjust="spacingAndGlyphs">Select</text>
<rect x="68.4" y="990.2" width="11.2" height="15" rx="3.6" fill="none" stroke="#9a9a9a" stroke-width="1.1"/>
<rect x="72.2" y="991.4" width="3.6" height="6.4" fill="#9a9a9a" rx="1.4"/>
<text x="84.6" y="1001.8" fill="#b4b4b4" font-size="11.2" textLength="62.0" lengthAdjust="spacingAndGlyphs">Rotate View</text>
<rect x="157.2" y="990.2" width="11.2" height="15" rx="3.6" fill="none" stroke="#9a9a9a" stroke-width="1.1"/>
<path d="M168.4 996.8V993.8A3.6 3.6 0 0 0 164.8 990.2H163.2V996.8Z" fill="#9a9a9a"/>
<text x="173.1" y="1001.8" fill="#b4b4b4" font-size="11.2" textLength="52.2" lengthAdjust="spacingAndGlyphs">Call Menu</text>
<text x="1882.3" y="1002" fill="#989898" font-size="11.2" textLength="26.1" lengthAdjust="spacingAndGlyphs">4.3.2</text>
</svg></body></html>
